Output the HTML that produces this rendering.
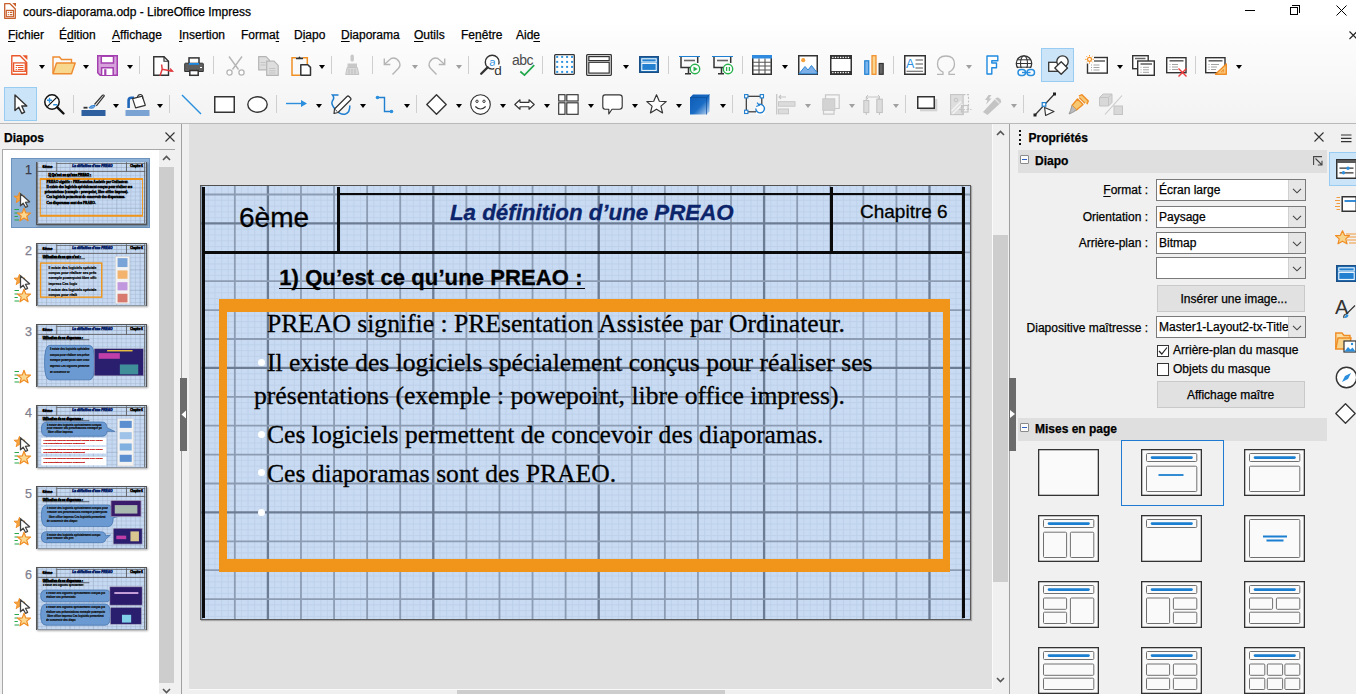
<!DOCTYPE html>
<html><head><meta charset="utf-8">
<style>
*{margin:0;padding:0;box-sizing:border-box}
html,body{width:1356px;height:694px;overflow:hidden;background:#f0f0f0;font-family:"Liberation Sans",sans-serif;font-size:12px;color:#000}
.a{position:absolute}
.t{position:absolute;white-space:pre;line-height:1}
.t{-webkit-text-stroke:0.25px currentColor}
.slide .t{-webkit-text-stroke:0.3px currentColor}
#top{left:0;top:0;width:1356px;height:124px;background:linear-gradient(#ffffff 0px,#ffffff 22px,#fcfcfc 40px,#f7f7f7 90px,#f2f2f2 123px)}
#topline{left:0;top:123px;width:1356px;height:1px;background:#b9b9b9}
.menu{top:29px;font-size:12px;color:#000}
.u{text-decoration:underline;text-underline-offset:2px}
.sep{position:absolute;width:1px;background:#cfcfcf}
.dd{position:absolute;width:0;height:0;border-left:3.5px solid transparent;border-right:3.5px solid transparent;border-top:4px solid #000}
.ddg{border-top-color:#a0a0a0}
svg{position:absolute;overflow:visible}
.mini .t{-webkit-text-stroke:4px currentColor}
</style></head><body>
<div id="top" class="a"></div>
<div id="topline" class="a"></div>

<!-- title bar -->
<svg style="left:4px;top:3px" width="12" height="16" viewBox="0 0 12 16"><path d="M0.7 0.7H6L11.3 6V15.3H0.7Z" fill="#fff" stroke="#c8602c" stroke-width="1.3" stroke-linejoin="round"/><path d="M8.3 0H12V3.7Z" fill="#c8602c"/><rect x="2.3" y="7.4" width="7.2" height="6.3" fill="none" stroke="#c8602c" stroke-width="1.2"/><path d="M3.8 9.4h1M5.8 9.4h2.5M3.8 11.6h1M5.8 11.6h2.5" stroke="#c8602c" stroke-width="1.1"/></svg>
<div class="t" style="left:23px;top:6px;font-size:12px">cours-diaporama.odp - LibreOffice Impress</div>
<div class="a" style="left:1245px;top:10px;width:10px;height:1px;background:#000"></div>
<div class="a" style="left:1290px;top:7px;width:8px;height:8px;border:1px solid #000;background:#fff"></div>
<div class="a" style="left:1292px;top:5px;width:8px;height:8px;border-top:1px solid #000;border-right:1px solid #000"></div>
<svg style="left:1336px;top:5px" width="11" height="11" viewBox="0 0 11 11"><path d="M0.5 0.5L10.5 10.5M10.5 0.5L0.5 10.5" stroke="#000" stroke-width="1"/></svg>

<!-- menu -->
<div class="t menu" style="left:8px"><span class="u">F</span>ichier</div>
<div class="t menu" style="left:59px">É<span class="u">d</span>ition</div>
<div class="t menu" style="left:112px"><span class="u">A</span>ffichage</div>
<div class="t menu" style="left:179px"><span class="u">I</span>nsertion</div>
<div class="t menu" style="left:241px">Forma<span class="u">t</span></div>
<div class="t menu" style="left:294px">D<span class="u">i</span>apo</div>
<div class="t menu" style="left:341px"><span class="u">D</span>iaporama</div>
<div class="t menu" style="left:414px"><span class="u">O</span>utils</div>
<div class="t menu" style="left:461px">Fe<span class="u">n</span>être</div>
<div class="t menu" style="left:516px">Aid<span class="u">e</span></div>
<svg style="left:1349px;top:30.5px" width="8" height="8" viewBox="0 0 8 8"><path d="M0.5 0.5L8 8M8 0.5L0.5 8" stroke="#222" stroke-width="1.1"/></svg>

<!-- TOOLBARS -->
<div class="a" style="left:4px;top:87px;width:33px;height:34px;background:#cce4f7;border:1px solid #99ccf3"></div>
<div class="a" style="left:1041px;top:48px;width:33px;height:34px;background:#cce4f7;border:1px solid #99ccf3"></div>
<svg style="left:1047.5px;top:54.5px" width="21" height="20" viewBox="0 0 21 20"><rect x="0.7" y="7.3" width="10" height="9" fill="#fff" stroke="#333" stroke-width="1.3"/><circle cx="14.5" cy="6.5" r="5.7" fill="#fff" stroke="#333" stroke-width="1.3"/><path d="M13.2 6.8L19.5 13L13.2 19.3L6.8 13Z" fill="#fff" stroke="#333" stroke-width="1.3" stroke-linejoin="round"/></svg>
<svg style="left:10.5px;top:55px" width="17" height="20" viewBox="0 0 17 20"><path d="M0.8 0.8H9L15.7 7.5V19.2H0.8Z" fill="#fff" stroke="#e9572b" stroke-width="1.4" stroke-linejoin="round"/><path d="M11.5 0.2H16.4V5.1Z" fill="#e9572b"/><rect x="2.6" y="7.9" width="11.7" height="8.4" fill="none" stroke="#e9572b" stroke-width="1.3"/><path d="M4.7 10.5H12.5M4.7 12.5h1.2M6.9 12.5H12.5M4.7 14.5h1.2M6.9 14.5H12.5" stroke="#e9572b" stroke-width="1"/></svg>
<svg style="left:51.5px;top:55.5px" width="24" height="19" viewBox="0 0 24 19"><path d="M1 17.5V1H7.5L9.5 3.5H19.5V7" fill="none" stroke="#ee8a2f" stroke-width="1.4"/><path d="M1 17.7L4.5 7H23.2L19.5 17.7Z" fill="#f8d88f" stroke="#ee8a2f" stroke-width="1.4" stroke-linejoin="round"/></svg>
<svg style="left:96.5px;top:54.5px" width="21" height="21" viewBox="0 0 21 21"><path d="M0.75 0.75H20.25V20.25H3.2L0.75 17.8Z" fill="#d7a2dc" stroke="#a43fb0" stroke-width="1.5"/><rect x="4.3" y="1.2" width="12.2" height="6.8" fill="#fff" stroke="#a43fb0" stroke-width="1.5"/><path d="M4.6 20V12.8H16.2V20" fill="#fff" stroke="#a43fb0" stroke-width="1.5"/><rect x="7.2" y="14.2" width="2.2" height="6" fill="#a43fb0"/></svg>
<svg style="left:152.5px;top:55.5px" width="21" height="21" viewBox="0 0 21 21"><path d="M0.75 0.75H11L15.5 5.25V19.25H0.75Z" fill="#fff" stroke="#333333" stroke-width="1.4"/><path d="M11 0.75V5.25H15.5" fill="none" stroke="#333333" stroke-width="1.2"/><path d="M8.6 8.5L9.2 13.2L7 19.8M9.2 13.2L19.5 15.2" fill="none" stroke="#e03a3e" stroke-width="1.5"/><path d="M15 14.5L19.5 15.2L17 12.5" fill="none" stroke="#e03a3e" stroke-width="1.2"/></svg>
<svg style="left:184px;top:56.5px" width="20" height="19" viewBox="0 0 20 19"><rect x="5" y="0.9" width="10" height="6" fill="#fff" stroke="#333333" stroke-width="1.5"/><path d="M1.5 6.2H18.5Q19.3 6.2 19.3 7V14.5H0.7V7Q0.7 6.2 1.5 6.2Z" fill="#5f5f5f" stroke="#333333" stroke-width="1"/><rect x="4.8" y="6" width="10.4" height="1.8" fill="#1e88e5"/><rect x="5.8" y="13.5" width="8.4" height="4.8" fill="#fff" stroke="#333333" stroke-width="1.5"/><rect x="16" y="10" width="2" height="1" fill="#fff"/></svg>
<svg style="left:225.5px;top:55.5px" width="19" height="20" viewBox="0 0 19 20"><path d="M3 0.5L12.5 13.5M16 0.5L6.5 13.5" stroke="#b5b5b5" stroke-width="1.4" fill="none"/><circle cx="3.5" cy="16.5" r="2.6" fill="#fff" stroke="#b5b5b5" stroke-width="1.3"/><circle cx="15.5" cy="16.5" r="2.6" fill="#fff" stroke="#b5b5b5" stroke-width="1.3"/></svg>
<svg style="left:257.5px;top:55.5px" width="21" height="20" viewBox="0 0 21 20"><path d="M0.7 0.7H8L11.5 4.2V13.8H0.7Z" fill="#dedede" stroke="#b5b5b5" stroke-width="1.2"/><path d="M8.7 5.2H16L20.2 9.4V19.3H8.7Z" fill="#dedede" stroke="#b5b5b5" stroke-width="1.2"/><path d="M11 12.5h6.5M11 14.8h6.5M11 17h6.5M2.5 6.5h5M2.5 9h5" stroke="#c4c4c4" stroke-width="1"/></svg>
<svg style="left:290.5px;top:54.5px" width="21" height="22" viewBox="0 0 21 22"><path d="M5 2.8H1V20.2H9M12 2.8H16.3V9" fill="none" stroke="#ef8f24" stroke-width="1.5"/><path d="M5 4.2V2.5H7.5Q8.5 0.5 9.5 2.5H12V4.2Z" fill="#333333"/><path d="M9.8 9.7H16.8L19.5 12.4V20.3H9.8Z" fill="#fff" stroke="#333333" stroke-width="1.5" stroke-linejoin="round"/></svg>
<svg style="left:345px;top:54px" width="15" height="22" viewBox="0 0 15 22"><rect x="5.5" y="0.6" width="3.4" height="7" rx="1.7" fill="#c8c8c8"/><path d="M2.5 9.5H12V13.5H2.5Z" fill="#c8c8c8"/><path d="M2.2 13.5L0.7 20.5H13.8L12.3 13.5Z" fill="#d8d8d8" stroke="#c4c4c4"/><path d="M4 15v5M7 15v5M10 15v5" stroke="#bdbdbd"/></svg>
<svg style="left:382.5px;top:55.5px" width="19" height="19" viewBox="0 0 19 19"><path d="M9.5 18.5L15.5 12.3Q18.2 9.3 16 5.5Q13 0.8 8 2.5L1.5 8.2" fill="none" stroke="#b5b5b5" stroke-width="1.4"/><path d="M1.3 2.5V8.5H7.3" fill="none" stroke="#b5b5b5" stroke-width="1.4"/></svg>
<svg style="left:426.5px;top:55.5px" width="19" height="19" viewBox="0 0 19 19"><path d="M9.5 18.5L3.5 12.3Q0.8 9.3 3 5.5Q6 0.8 11 2.5L17.5 8.2" fill="none" stroke="#b5b5b5" stroke-width="1.4"/><path d="M17.7 2.5V8.5H11.7" fill="none" stroke="#b5b5b5" stroke-width="1.4"/></svg>
<svg style="left:480px;top:55px" width="22" height="21" viewBox="0 0 22 21"><circle cx="12.2" cy="7.2" r="6.9" fill="#fff" stroke="#333333" stroke-width="1.4"/><path d="M7.6 12.4L1.2 18.8" stroke="#333333" stroke-width="2.3" stroke-linecap="round"/><text x="9.3" y="10.6" font-family="Liberation Sans" font-size="11.5" fill="#2b8fde">a</text><rect x="14.3" y="9.5" width="8" height="11" fill="#fcfcfc"/><text x="14.3" y="19.6" font-family="Liberation Sans" font-size="13.5" fill="#333333">d</text></svg>
<svg style="left:511.5px;top:54px" width="23" height="22" viewBox="0 0 23 22"><text x="0" y="10.6" font-family="Liberation Sans" font-size="14" fill="#4a4a4a" letter-spacing="-0.5">abc</text><path d="M8.3 17.5L12.5 21.2L22.2 11.2" fill="none" stroke="#20a84a" stroke-width="1.7"/></svg>
<svg style="left:554px;top:54px" width="21" height="21" viewBox="0 0 21 21"><rect x="0.7" y="0.7" width="19.6" height="19.6" rx="0.8" fill="#fff" stroke="#333333" stroke-width="1.3"/><rect x="2.20" y="1.90" width="2" height="2" fill="#2f93e0"/><rect x="2.20" y="6.90" width="2" height="2" fill="#2f93e0"/><rect x="2.20" y="11.90" width="2" height="2" fill="#2f93e0"/><rect x="2.20" y="16.90" width="2" height="2" fill="#2f93e0"/><rect x="7.15" y="1.90" width="2" height="2" fill="#2f93e0"/><rect x="7.15" y="6.90" width="2" height="2" fill="#2f93e0"/><rect x="7.15" y="11.90" width="2" height="2" fill="#2f93e0"/><rect x="7.15" y="16.90" width="2" height="2" fill="#2f93e0"/><rect x="12.10" y="1.90" width="2" height="2" fill="#2f93e0"/><rect x="12.10" y="6.90" width="2" height="2" fill="#2f93e0"/><rect x="12.10" y="11.90" width="2" height="2" fill="#2f93e0"/><rect x="12.10" y="16.90" width="2" height="2" fill="#2f93e0"/><rect x="17.05" y="1.90" width="2" height="2" fill="#2f93e0"/><rect x="17.05" y="6.90" width="2" height="2" fill="#2f93e0"/><rect x="17.05" y="11.90" width="2" height="2" fill="#2f93e0"/><rect x="17.05" y="16.90" width="2" height="2" fill="#2f93e0"/></svg>
<svg style="left:586px;top:54px" width="26" height="22" viewBox="0 0 26 22"><rect x="0.7" y="0.7" width="24.6" height="20.6" rx="0.8" fill="#fff" stroke="#333333" stroke-width="1.3"/><rect x="2.8" y="2.6" width="20.4" height="4" fill="none" stroke="#333333" stroke-width="1.2"/><rect x="2.8" y="8.3" width="20.4" height="10.8" fill="none" stroke="#333333" stroke-width="1.2"/></svg>
<svg style="left:639px;top:56px" width="20" height="17" viewBox="0 0 20 17"><rect x="0.75" y="0.75" width="18.5" height="15.5" fill="#2380d0" stroke="#1b4f85" stroke-width="1.5"/><rect x="2.8" y="2.8" width="14.4" height="3.2" fill="none" stroke="#fff" stroke-width="1"/><rect x="2.8" y="7.4" width="14.4" height="7" fill="none" stroke="#fff" stroke-width="1"/></svg>
<svg style="left:679px;top:55.5px" width="22" height="19" viewBox="0 0 22 19"><path d="M0 0.5H21" stroke="#1f7fd0" stroke-width="1"/><path d="M2 1V11.5H11" fill="none" stroke="#333333" stroke-width="1.5"/><path d="M18.7 1V7" stroke="#333333" stroke-width="1.5"/><path d="M5 4.5H16" stroke="#666" stroke-width="1.6"/><path d="M9.5 11.5V17.5M6 17.7H12" stroke="#333333" stroke-width="1.5"/><circle cx="16" cy="13" r="4.7" fill="#fff" stroke="#28b04d" stroke-width="1.4"/><path d="M14.5 10.5L18.7 13L14.5 15.5Z" fill="#28b04d"/></svg>
<svg style="left:712px;top:55.5px" width="22" height="19" viewBox="0 0 22 19"><path d="M0 0.5H21" stroke="#1f7fd0" stroke-width="1"/><path d="M2 1V11.5H11" fill="none" stroke="#333333" stroke-width="1.5"/><path d="M18.7 1V7" stroke="#333333" stroke-width="1.5"/><path d="M5 4.5H16" stroke="#666" stroke-width="1.6"/><path d="M9.5 11.5V17.5M6 17.7H12" stroke="#333333" stroke-width="1.5"/><circle cx="16" cy="13" r="4.7" fill="#fff" stroke="#28b04d" stroke-width="1.4"/><path d="M14.6 11v4M17.4 11v4" stroke="#28b04d" stroke-width="1.3"/></svg>
<svg style="left:752px;top:55px" width="20" height="20" viewBox="0 0 20 20"><rect x="0.75" y="0.75" width="18.5" height="18.5" fill="#fff" stroke="#333333" stroke-width="1.5"/><rect x="0" y="0" width="20" height="3.5" fill="#2f8be0"/><path d="M1 7.2H19M1 11H19M1 15H19M7 3.5V19M13 3.5V19" stroke="#555" stroke-width="1.1"/></svg>
<svg style="left:798px;top:55px" width="20" height="20" viewBox="0 0 20 20"><rect x="0.75" y="0.75" width="18.5" height="18.5" fill="#fff" stroke="#333333" stroke-width="1.5"/><circle cx="5.2" cy="5.2" r="2.1" fill="#f5a03a"/><path d="M1 18.8L7 11.5L10 15L13.5 10.5L19 17.5V18.8Z" fill="#7db0e8" stroke="#2e86d6" stroke-width="1"/></svg>
<svg style="left:830px;top:55px" width="22" height="20" viewBox="0 0 22 20"><rect x="0.75" y="0.75" width="20.5" height="18.5" fill="#fff" stroke="#333333" stroke-width="1.5"/><rect x="1" y="1" width="20" height="3" fill="#333333"/><rect x="1" y="16" width="20" height="3" fill="#333333"/><rect x="2.2" y="1.8" width="1.3" height="1.3" fill="#fff"/><rect x="2.2" y="16.9" width="1.3" height="1.3" fill="#fff"/><rect x="4.800000000000001" y="1.8" width="1.3" height="1.3" fill="#fff"/><rect x="4.800000000000001" y="16.9" width="1.3" height="1.3" fill="#fff"/><rect x="7.4" y="1.8" width="1.3" height="1.3" fill="#fff"/><rect x="7.4" y="16.9" width="1.3" height="1.3" fill="#fff"/><rect x="10.0" y="1.8" width="1.3" height="1.3" fill="#fff"/><rect x="10.0" y="16.9" width="1.3" height="1.3" fill="#fff"/><rect x="12.600000000000001" y="1.8" width="1.3" height="1.3" fill="#fff"/><rect x="12.600000000000001" y="16.9" width="1.3" height="1.3" fill="#fff"/><rect x="15.2" y="1.8" width="1.3" height="1.3" fill="#fff"/><rect x="15.2" y="16.9" width="1.3" height="1.3" fill="#fff"/><rect x="17.8" y="1.8" width="1.3" height="1.3" fill="#fff"/><rect x="17.8" y="16.9" width="1.3" height="1.3" fill="#fff"/></svg>
<svg style="left:864px;top:55px" width="20" height="20" viewBox="0 0 20 20"><rect x="0.75" y="5.8" width="4" height="13.5" fill="#7ab5ee" stroke="#1f7fd0" stroke-width="1.2"/><rect x="8" y="0.7" width="4" height="18.6" fill="#f8d490" stroke="#f08a24" stroke-width="1.2"/><rect x="15.2" y="8.5" width="4" height="10.8" fill="#666" stroke="#333" stroke-width="1.2"/></svg>
<svg style="left:904px;top:55px" width="22" height="20" viewBox="0 0 22 20"><rect x="0.75" y="0.75" width="20.5" height="18.5" fill="#fff" stroke="#333333" stroke-width="1.5"/><text x="2" y="13.3" font-family="Liberation Sans" font-size="12.5" fill="#2b8fde">A</text><path d="M11.5 5H19M11.5 9H19M11.5 13H19M2.5 16.3H19" stroke="#555" stroke-width="1.1"/></svg>
<svg style="left:936px;top:55px" width="20" height="20" viewBox="0 0 20 20"><path d="M1 19.3H7V17.2Q1.5 14.5 1.5 9Q1.5 1 10 1Q18.5 1 18.5 9Q18.5 14.5 13 17.2V19.3H19" fill="none" stroke="#b5b5b5" stroke-width="1.3"/></svg>
<svg style="left:985.5px;top:55px" width="13" height="20" viewBox="0 0 13 20"><path d="M1 1H11.8V5.8H5.8V8H10.5V12.8H5.8V19H1Z" fill="#fff" stroke="#1f8ae0" stroke-width="1.4" stroke-linejoin="round"/></svg>
<svg style="left:1015px;top:55px" width="21" height="22" viewBox="0 0 21 22"><circle cx="9" cy="8.5" r="7.7" fill="#fff" stroke="#333333" stroke-width="1.3"/><ellipse cx="9" cy="8.5" rx="3.5" ry="7.7" fill="none" stroke="#333333" stroke-width="1.1"/><path d="M1.3 8.5H16.7M2.5 4.8H15.5M2.5 12.2H15.5" stroke="#333333" stroke-width="1"/><rect x="2.2" y="13" width="18" height="8" fill="#fcfcfc"/><rect x="3" y="14.5" width="7.5" height="6" rx="3" fill="none" stroke="#2b8fde" stroke-width="1.5"/><rect x="12" y="14.5" width="7.5" height="6" rx="3" fill="none" stroke="#2b8fde" stroke-width="1.5"/><path d="M7 17.5H15.5" stroke="#2b8fde" stroke-width="1.4"/></svg>
<svg style="left:1085px;top:54.5px" width="23" height="19" viewBox="0 0 23 19"><rect x="2.5" y="2.5" width="19.8" height="15.6" fill="#fff" stroke="#333333" stroke-width="1.4"/><path d="M9 6H20" stroke="#666" stroke-width="1.6"/><path d="M6 10h1M8.5 10h6M6 12.5h1M8.5 12.5h6M6 15h1M8.5 15h6" stroke="#999" stroke-width="0.9"/><rect x="0" y="0" width="9" height="8.5" fill="#fcfcfc"/><circle cx="4.5" cy="4.3" r="2" fill="none" stroke="#f39224" stroke-width="1.2"/><path d="M4.5 0V1.3M4.5 7.3V8.6M0.2 4.3H1.5M7.5 4.3H8.8M1.5 1.3L2.4 2.2M6.6 6.4L7.5 7.3M7.5 1.3L6.6 2.2M1.5 7.3L2.4 6.4" stroke="#f39224" stroke-width="1"/></svg>
<svg style="left:1132px;top:55px" width="23" height="21" viewBox="0 0 23 21"><rect x="0.7" y="0.7" width="15.5" height="13" fill="#fff" stroke="#333333" stroke-width="1.4"/><path d="M3 3.5H13.5" stroke="#666" stroke-width="1.5"/><rect x="5.7" y="6" width="16.6" height="14.3" fill="#fff" stroke="#333333" stroke-width="1.4"/><path d="M8.5 9H20" stroke="#666" stroke-width="1.6"/><path d="M8.5 12.3h1M11 12.3h6M8.5 14.8h1M11 14.8h6M8.5 17.3h1M11 17.3h6" stroke="#999" stroke-width="0.9"/></svg>
<svg style="left:1166px;top:56.5px" width="22" height="20" viewBox="0 0 22 20"><rect x="0.7" y="0.7" width="19.3" height="15" fill="#fff" stroke="#333333" stroke-width="1.4"/><path d="M3.5 3.8H17.5" stroke="#666" stroke-width="1.6"/><path d="M3.5 7.5h1M6 7.5h6M3.5 10h1M6 10h6M3.5 12.5h1M6 12.5h6" stroke="#999" stroke-width="0.9"/><path d="M12.5 11.5L20.5 19.5M20.5 11.5L12.5 19.5" stroke="#ee3b3b" stroke-width="1.4"/></svg>
<svg style="left:1204.5px;top:57px" width="22" height="18" viewBox="0 0 22 18"><rect x="0.7" y="0.7" width="19.3" height="15" fill="#fff" stroke="#333333" stroke-width="1.4"/><path d="M3.5 3.8H17.5" stroke="#666" stroke-width="1.6"/><path d="M3.5 7.5h1M6 7.5h8M3.5 10h1M6 10h6M3.5 12.5h1M6 12.5h5" stroke="#999" stroke-width="0.9"/><path d="M21.3 7V17.3H10.5Z" fill="#f8c87a" stroke="#ef8c24" stroke-width="1.4" stroke-linejoin="round"/><path d="M18.5 12.5V14.8H16.2Z" fill="#fff" stroke="#ef8c24" stroke-width="0.9"/></svg>
<svg style="left:13.5px;top:93.5px" width="15" height="21" viewBox="0 0 15 21"><path d="M1 1V16.5L4.8 13.3L7.8 19.5L10.6 18.2L7.8 12H12.8Z" fill="#fff" stroke="#333333" stroke-width="1.4" stroke-linejoin="round"/></svg>
<svg style="left:43.5px;top:93.5px" width="21" height="21" viewBox="0 0 21 21"><circle cx="8" cy="8" r="7.2" fill="#fff" stroke="#111" stroke-width="1.5"/><path d="M3.3 12.7L12.7 3.3" stroke="#111" stroke-width="1.2"/><path d="M3 6.2H8M5.5 3.7V8.7M9.2 10.8H13.2" stroke="#2b8fde" stroke-width="1.4"/><path d="M13.3 13.3L19.5 19.5" stroke="#111" stroke-width="2.4" stroke-linecap="round"/></svg>
<svg style="left:80.5px;top:94px" width="25" height="23" viewBox="0 0 25 23"><path d="M11.5 11.5Q9 12 8 13.8Q10.5 14.7 12.5 13.8Q14 13 14.2 11.5Z" fill="#6ea7e2" stroke="#2f7fcf" stroke-width="1"/><path d="M13.5 10.5L21.5 1.3Q23 0.5 23.3 1.8L15.3 11.8" fill="#fff" stroke="#333333" stroke-width="1.2"/><rect x="2.5" y="12.8" width="4" height="1.8" fill="#333333"/><rect x="0.5" y="16" width="24" height="6" fill="#2e5f9e"/></svg>
<svg style="left:124.5px;top:94px" width="25" height="23" viewBox="0 0 25 23"><path d="M3.6 14V6.5Q3.6 3.8 6.5 3.8H9" fill="none" stroke="#1f66b8" stroke-width="2.6"/><path d="M7.6 4.6L17.3 2.2L20.3 11.3L10.6 13.9Z" fill="#fff" stroke="#333333" stroke-width="1.2" stroke-linejoin="round"/><path d="M12.3 3.5Q13 0.3 15.5 0.5Q18.3 0.9 17.6 4.6" fill="none" stroke="#333333" stroke-width="1.1"/><rect x="0.5" y="16" width="24" height="6" fill="#7aa3d4"/></svg>
<svg style="left:181px;top:93.5px" width="21" height="21" viewBox="0 0 21 21"><path d="M1 1L20 20" stroke="#2b8fde" stroke-width="1.4"/></svg>
<svg style="left:213.5px;top:95.5px" width="21" height="17" viewBox="0 0 21 17"><rect x="0.75" y="0.75" width="19.5" height="15.5" fill="#fff" stroke="#333333" stroke-width="1.5"/></svg>
<svg style="left:246.5px;top:95.5px" width="21" height="17" viewBox="0 0 21 17"><ellipse cx="10.5" cy="8.5" rx="9.7" ry="7.7" fill="#fff" stroke="#333333" stroke-width="1.4"/></svg>
<svg style="left:286px;top:99.5px" width="21" height="7" viewBox="0 0 21 7"><path d="M0 3.5H17" stroke="#2b8fde" stroke-width="1.4"/><path d="M15 0L21 3.5L15 7Z" fill="#2b8fde"/></svg>
<svg style="left:331px;top:93.5px" width="20" height="22" viewBox="0 0 20 22"><path d="M7.5 1H1.5Q4 4 1.3 7Q-0.5 10.5 5 16Q9 21 14.5 20Q19 18.5 18.8 11.5" fill="none" stroke="#1f7fd0" stroke-width="1.5"/><path d="M3.5 15L16 2.5Q17 1.5 18 2.5L19.5 4Q20.5 5 19.5 6L7 18.5L3 19.5Z" fill="#fff" stroke="#333333" stroke-width="1.2" stroke-linejoin="round"/><path d="M4.2 15.5L6.5 17.8" stroke="#333333" stroke-width="1"/></svg>
<svg style="left:374.5px;top:94.5px" width="19" height="19" viewBox="0 0 19 19"><path d="M2.5 2.5H9.5V16.5H16.5" fill="none" stroke="#1f7fd0" stroke-width="1.4"/><circle cx="2.5" cy="2.5" r="1.8" fill="#2b8fde"/><circle cx="16.5" cy="16.5" r="1.8" fill="#2b8fde"/></svg>
<svg style="left:426px;top:93.5px" width="21" height="21" viewBox="0 0 21 21"><path d="M10.5 0.8L20.2 10.5L10.5 20.2L0.8 10.5Z" fill="#fff" stroke="#333333" stroke-width="1.4" stroke-linejoin="round"/></svg>
<svg style="left:469.5px;top:93.5px" width="21" height="21" viewBox="0 0 21 21"><circle cx="10.5" cy="10.5" r="9.8" fill="#fff" stroke="#333333" stroke-width="1.15"/><circle cx="7" cy="7.3" r="1.2" fill="none" stroke="#333333" stroke-width="1"/><circle cx="14" cy="7.3" r="1.2" fill="none" stroke="#333333" stroke-width="1"/><path d="M5.3 12.5Q10.5 17.5 15.7 12.5" fill="none" stroke="#333333" stroke-width="1.15"/></svg>
<svg style="left:514px;top:98.5px" width="21" height="11" viewBox="0 0 21 11"><path d="M0.8 5.5L6 0.8V3.3H15V0.8L20.2 5.5L15 10.2V7.7H6V10.2Z" fill="#fff" stroke="#333333" stroke-width="1.15" stroke-linejoin="round"/></svg>
<svg style="left:558px;top:93.5px" width="21" height="21" viewBox="0 0 21 21"><rect x="0.7" y="0.7" width="6.3" height="6.3" fill="#fff" stroke="#333333" stroke-width="1.15"/><rect x="8.8" y="0.7" width="11.3" height="6.3" fill="#fff" stroke="#333333" stroke-width="1.15"/><rect x="0.7" y="8.8" width="6.3" height="11.5" fill="#fff" stroke="#333333" stroke-width="1.15"/><rect x="8.8" y="8.8" width="11.3" height="11.5" fill="#fff" stroke="#333333" stroke-width="1.15"/></svg>
<svg style="left:601.5px;top:93.5px" width="21" height="21" viewBox="0 0 21 21"><path d="M3 0.8H17.5Q20.2 0.8 20.2 3.5V12.5Q20.2 15.2 17.5 15.2H10L6.8 20V15.2H3Q0.8 15.2 0.8 12.5V3.5Q0.8 0.8 3 0.8Z" fill="#fff" stroke="#333333" stroke-width="1.15" stroke-linejoin="round"/></svg>
<svg style="left:645.5px;top:94px" width="21" height="20" viewBox="0 0 21 20"><path d="M10.5 0.8L13.3 7.2L20.2 7.6L14.9 12.1L16.6 19L10.5 15.2L4.4 19L6.1 12.1L0.8 7.6L7.7 7.2Z" fill="#fff" stroke="#333333" stroke-width="1.15" stroke-linejoin="round"/></svg>
<svg style="left:690px;top:93.5px" width="20" height="21" viewBox="0 0 20 21"><defs><linearGradient id="cg" x1="0" y1="0" x2="1" y2="1"><stop offset="0" stop-color="#0d5bb5"/><stop offset="0.55" stop-color="#1a6cc4"/><stop offset="1" stop-color="#c8dcf3"/></linearGradient></defs><path d="M3 0.5H19.5V17.5L16.5 20.5H0V3.5Z" fill="url(#cg)"/><path d="M0 3.5H16.5V20.5M16.5 3.5L19.5 0.5" fill="none" stroke="#0b4c9a" stroke-width="0.7"/></svg>
<svg style="left:743.5px;top:93.5px" width="22" height="21" viewBox="0 0 22 21"><rect x="2.3" y="2.3" width="15.5" height="15.5" fill="none" stroke="#333333" stroke-width="1.2"/><rect x="0.6" y="0.6" width="3.3" height="3.3" fill="#fff" stroke="#1f7fd0" stroke-width="1.1"/><rect x="16.2" y="0.6" width="3.3" height="3.3" fill="#fff" stroke="#1f7fd0" stroke-width="1.1"/><rect x="0.6" y="16.2" width="3.3" height="3.3" fill="#fff" stroke="#1f7fd0" stroke-width="1.1"/><rect x="12" y="11" width="9" height="10" fill="#fcfcfc"/><path d="M14 10.8A4.3 4.3 0 1 1 11.8 14.5" fill="none" stroke="#1f7fd0" stroke-width="1.4"/><path d="M13 8.7L15.3 11.2L12.2 12.5" fill="none" stroke="#1f7fd0" stroke-width="1.2"/></svg>
<svg style="left:776px;top:93.5px" width="20" height="21" viewBox="0 0 20 21"><path d="M0.7 0V20.5" stroke="#c4c4c4" stroke-width="1.2"/><path d="M3 3H10M5 1L3 3L5 5" fill="none" stroke="#c4c4c4" stroke-width="1.1"/><rect x="2.5" y="7.7" width="16.5" height="4.5" fill="#dcdcdc" stroke="#c8c8c8"/><rect x="2.5" y="15" width="10" height="4.8" fill="#dcdcdc" stroke="#c8c8c8"/></svg>
<svg style="left:818.5px;top:93.5px" width="21" height="21" viewBox="0 0 21 21"><path d="M6.5 5V0.8H20.2V14.5H16" fill="none" stroke="#c8c8c8" stroke-width="1.2"/><path d="M4.5 16V20.2H15V16" fill="none" stroke="#c8c8c8" stroke-width="1.2"/><rect x="3.8" y="4.8" width="12" height="11.5" fill="#d3d3d3" stroke="#c8c8c8"/></svg>
<svg style="left:862.5px;top:93.5px" width="21" height="21" viewBox="0 0 21 21"><path d="M3 3H17M5 1L3 3L5 5M15 1L17 3L15 5" fill="none" stroke="#c4c4c4" stroke-width="1"/><rect x="0.8" y="6.5" width="5" height="12" fill="#dcdcdc" stroke="#c4c4c4" stroke-width="1.1"/><rect x="13.8" y="5.2" width="5.5" height="13.3" fill="#dcdcdc" stroke="#c4c4c4" stroke-width="1.1"/><path d="M3.3 3V6.5M3.3 18.5V21M16.5 3V5.2M16.5 18.5V21" stroke="#c4c4c4"/></svg>
<svg style="left:917px;top:95.5px" width="21" height="16" viewBox="0 0 21 16"><rect x="3" y="3" width="17.3" height="12.3" fill="#d2d2d2"/><rect x="0.75" y="0.75" width="16.5" height="11.5" fill="#fff" stroke="#333333" stroke-width="1.5"/></svg>
<svg style="left:950px;top:93.5px" width="22" height="22" viewBox="0 0 22 22"><rect x="0.6" y="0.6" width="12.5" height="20" fill="#dedede" stroke="#c4c4c4" stroke-width="1.1"/><circle cx="6" cy="6" r="1.8" fill="none" stroke="#c4c4c4"/><path d="M1.5 17L11 7.5M2.5 20L12.5 10" stroke="#f5f5f5" stroke-width="1.3"/><path d="M13.2 0.6H18.5V15.5M9 15.5H21.5M13 11.5V21.5" fill="none" stroke="#c4c4c4" stroke-width="1.1" stroke-dasharray="2.2 1.5"/><rect x="11.5" y="11.5" width="6.5" height="6.5" fill="none" stroke="#c4c4c4" stroke-width="1.2"/></svg>
<svg style="left:980.5px;top:93.5px" width="21" height="21" viewBox="0 0 21 21"><path d="M2 18L14.5 4.5Q16.5 2.5 18.5 4.5L19.5 5.5Q21 7.5 19 9.5L6.5 21Z" fill="#c4c4c4"/><path d="M4 6L7.5 1H10.5L8 4.5H10.5L5 10.5L6.5 6Z" fill="#c4c4c4"/><path d="M14 5L18.5 9.5" stroke="#e6e6e6" stroke-width="1.2"/></svg>
<svg style="left:1032.5px;top:91.5px" width="23" height="25" viewBox="0 0 23 25"><path d="M2 23L21.5 2" stroke="#333333" stroke-width="1.15"/><rect x="0.5" y="21.5" width="3" height="3" fill="#222"/><rect x="20" y="0.5" width="3" height="3" fill="#222"/><rect x="9.2" y="10.6" width="3.6" height="3.6" fill="#fff" stroke="#1f7fd0" stroke-width="1.2"/><path d="M11.6 15.5L21 19.5L12.6 23.5Z" fill="#fff" stroke="#333333" stroke-width="1.15" stroke-linejoin="round"/></svg>
<svg style="left:1067.5px;top:93.5px" width="21" height="21" viewBox="0 0 21 21"><path d="M9.5 5L15 10.5L8.5 16L4 11.5Z" fill="#f7c873" stroke="#ef8c24" stroke-width="1.3" stroke-linejoin="round"/><path d="M11.3 3.5L17 9.2M10.8 2L14 0.7L20.3 7L19 10.2" fill="#f7c873" stroke="#ef8c24" stroke-width="1.3" stroke-linejoin="round"/><path d="M4 11.5L2.5 16.5L1 20L4.5 18.5L8.5 16" fill="#bbb" stroke="#999" stroke-width="1"/></svg>
<svg style="left:1099px;top:93px" width="25" height="22" viewBox="0 0 25 22"><path d="M0.5 4.5L4 1H13V9.5L9.5 13H0.5Z" fill="#d8d8d8" stroke="#c4c4c4"/><path d="M0.5 4.5H9.5V13M9.5 4.5L13 1" fill="none" stroke="#c4c4c4"/><path d="M6 21.5L23 2.5" stroke="#c8c8c8" stroke-width="1.1"/><rect x="15" y="13" width="8.5" height="8.5" fill="#d8d8d8" stroke="#c4c4c4"/></svg>
<div class="dd" style="left:38.5px;top:65px"></div>
<div class="dd" style="left:83px;top:65px"></div>
<div class="dd" style="left:126.8px;top:65px"></div>
<div class="dd" style="left:319px;top:65px"></div>
<div class="dd ddg" style="left:412px;top:65px"></div>
<div class="dd ddg" style="left:456px;top:65px"></div>
<div class="dd" style="left:623.2px;top:65px"></div>
<div class="dd" style="left:782.2px;top:65px"></div>
<div class="dd ddg" style="left:966px;top:65px"></div>
<div class="dd" style="left:1117.3px;top:65px"></div>
<div class="dd" style="left:1235.5px;top:65px"></div>
<div class="dd" style="left:112.8px;top:104px"></div>
<div class="dd" style="left:157.3px;top:104px"></div>
<div class="dd" style="left:316px;top:104px"></div>
<div class="dd" style="left:360.3px;top:104px"></div>
<div class="dd" style="left:404.4px;top:104px"></div>
<div class="dd" style="left:456px;top:104px"></div>
<div class="dd" style="left:500.2px;top:104px"></div>
<div class="dd" style="left:543.8px;top:104px"></div>
<div class="dd" style="left:588.3px;top:104px"></div>
<div class="dd" style="left:632px;top:104px"></div>
<div class="dd" style="left:676.4px;top:104px"></div>
<div class="dd" style="left:719.8px;top:104px"></div>
<div class="dd ddg" style="left:804.8px;top:104px"></div>
<div class="dd ddg" style="left:849px;top:104px"></div>
<div class="dd ddg" style="left:893px;top:104px"></div>
<div class="dd ddg" style="left:1011.3px;top:104px"></div>
<div class="sep" style="left:138.9px;top:56px;height:18px"></div>
<div class="sep" style="left:213px;top:56px;height:18px"></div>
<div class="sep" style="left:331.2px;top:56px;height:18px"></div>
<div class="sep" style="left:372px;top:56px;height:18px"></div>
<div class="sep" style="left:468.3px;top:56px;height:18px"></div>
<div class="sep" style="left:542px;top:56px;height:18px"></div>
<div class="sep" style="left:667.9px;top:56px;height:18px"></div>
<div class="sep" style="left:741.9px;top:56px;height:18px"></div>
<div class="sep" style="left:893px;top:56px;height:18px"></div>
<div class="sep" style="left:1195px;top:56px;height:18px"></div>
<div class="sep" style="left:72.9px;top:95px;height:18px"></div>
<div class="sep" style="left:169.2px;top:95px;height:18px"></div>
<div class="sep" style="left:276.1px;top:95px;height:18px"></div>
<div class="sep" style="left:416.1px;top:95px;height:18px"></div>
<div class="sep" style="left:731.9px;top:95px;height:18px"></div>
<div class="sep" style="left:905px;top:95px;height:18px"></div>
<div class="sep" style="left:1023px;top:95px;height:18px"></div>

<!-- LEFT PANE -->
<div class="t" style="left:4px;top:132px;font-weight:bold;font-size:12px">Diapos</div>
<svg style="left:165px;top:132px" width="10" height="10" viewBox="0 0 10 10"><path d="M0.5 0.5L9.5 9.5M9.5 0.5L0.5 9.5" stroke="#333" stroke-width="1.1"/></svg>
<div class="a" style="left:2px;top:149px;width:173px;height:545px;background:#fff;border-left:1px solid #a8a8a8;border-top:1px solid #a8a8a8"></div>
<div class="a" style="left:159px;top:150px;width:16px;height:544px;background:#f0f0f0"></div>
<div class="a" style="left:159px;top:167px;width:15px;height:516px;background:#cdcdcd"></div>
<svg style="left:162px;top:155px" width="9" height="6" viewBox="0 0 9 6"><path d="M1 5L4.5 1.5L8 5" fill="none" stroke="#555" stroke-width="1.6"/></svg>
<svg style="left:162px;top:688px" width="9" height="6" viewBox="0 0 9 6"><path d="M1 1L4.5 4.5L8 1" fill="none" stroke="#555" stroke-width="1.6"/></svg>
<div class="a" style="left:181px;top:124px;width:1px;height:570px;background:#a0a0a0"></div>
<div class="a" style="left:11px;top:158px;width:139px;height:70px;background:#8fb1d5;border:1px solid #6b93bd"></div>
<div class="a" style="left:35.5px;top:161.5px;width:111px;height:63px;background:#555;box-shadow:1px 1px 2px rgba(0,0,0,.35)"></div>
<div class="a mini" style="left:36.5px;top:162px;width:771px;height:435px;transform-origin:0 0;transform:scale(0.14137483787289234);background:#c6d9f2;overflow:hidden"><svg style="left:0;top:0" width="771" height="435" viewBox="0 0 771 435"><line x1="1.74" y1="0" x2="1.74" y2="435" stroke="#9fb0c7" stroke-width="2.6"/><line x1="34.82" y1="0" x2="34.82" y2="435" stroke="#9fb0c7" stroke-width="2.6"/><line x1="67.9" y1="0" x2="67.9" y2="435" stroke="#8595ad" stroke-width="3.1"/><line x1="100.98" y1="0" x2="100.98" y2="435" stroke="#9fb0c7" stroke-width="2.6"/><line x1="134.06" y1="0" x2="134.06" y2="435" stroke="#9fb0c7" stroke-width="2.6"/><line x1="167.14" y1="0" x2="167.14" y2="435" stroke="#9fb0c7" stroke-width="2.6"/><line x1="200.22" y1="0" x2="200.22" y2="435" stroke="#9fb0c7" stroke-width="2.6"/><line x1="233.3" y1="0" x2="233.3" y2="435" stroke="#8595ad" stroke-width="3.1"/><line x1="266.38" y1="0" x2="266.38" y2="435" stroke="#9fb0c7" stroke-width="2.6"/><line x1="299.46" y1="0" x2="299.46" y2="435" stroke="#9fb0c7" stroke-width="2.6"/><line x1="332.54" y1="0" x2="332.54" y2="435" stroke="#9fb0c7" stroke-width="2.6"/><line x1="365.62" y1="0" x2="365.62" y2="435" stroke="#9fb0c7" stroke-width="2.6"/><line x1="398.7" y1="0" x2="398.7" y2="435" stroke="#8595ad" stroke-width="3.1"/><line x1="431.78" y1="0" x2="431.78" y2="435" stroke="#9fb0c7" stroke-width="2.6"/><line x1="464.86" y1="0" x2="464.86" y2="435" stroke="#9fb0c7" stroke-width="2.6"/><line x1="497.94" y1="0" x2="497.94" y2="435" stroke="#9fb0c7" stroke-width="2.6"/><line x1="531.02" y1="0" x2="531.02" y2="435" stroke="#9fb0c7" stroke-width="2.6"/><line x1="564.1" y1="0" x2="564.1" y2="435" stroke="#8595ad" stroke-width="3.1"/><line x1="597.18" y1="0" x2="597.18" y2="435" stroke="#9fb0c7" stroke-width="2.6"/><line x1="630.26" y1="0" x2="630.26" y2="435" stroke="#9fb0c7" stroke-width="2.6"/><line x1="663.34" y1="0" x2="663.34" y2="435" stroke="#9fb0c7" stroke-width="2.6"/><line x1="696.42" y1="0" x2="696.42" y2="435" stroke="#9fb0c7" stroke-width="2.6"/><line x1="729.5" y1="0" x2="729.5" y2="435" stroke="#8595ad" stroke-width="3.1"/><line x1="762.58" y1="0" x2="762.58" y2="435" stroke="#9fb0c7" stroke-width="2.6"/><line x1="0" y1="9.5" x2="771" y2="9.5" stroke="#9fb0c7" stroke-width="2.6"/><line x1="0" y1="38.4" x2="771" y2="38.4" stroke="#8595ad" stroke-width="3.1"/><line x1="0" y1="67.3" x2="771" y2="67.3" stroke="#9fb0c7" stroke-width="2.6"/><line x1="0" y1="96.2" x2="771" y2="96.2" stroke="#9fb0c7" stroke-width="2.6"/><line x1="0" y1="125.1" x2="771" y2="125.1" stroke="#9fb0c7" stroke-width="2.6"/><line x1="0" y1="154" x2="771" y2="154" stroke="#9fb0c7" stroke-width="2.6"/><line x1="0" y1="182.9" x2="771" y2="182.9" stroke="#8595ad" stroke-width="3.1"/><line x1="0" y1="211.8" x2="771" y2="211.8" stroke="#9fb0c7" stroke-width="2.6"/><line x1="0" y1="240.7" x2="771" y2="240.7" stroke="#9fb0c7" stroke-width="2.6"/><line x1="0" y1="269.6" x2="771" y2="269.6" stroke="#9fb0c7" stroke-width="2.6"/><line x1="0" y1="298.5" x2="771" y2="298.5" stroke="#9fb0c7" stroke-width="2.6"/><line x1="0" y1="327.4" x2="771" y2="327.4" stroke="#8595ad" stroke-width="3.1"/><line x1="0" y1="356.3" x2="771" y2="356.3" stroke="#9fb0c7" stroke-width="2.6"/><line x1="0" y1="385.2" x2="771" y2="385.2" stroke="#9fb0c7" stroke-width="2.6"/><line x1="0" y1="414.1" x2="771" y2="414.1" stroke="#9fb0c7" stroke-width="2.6"/></svg><div class="a" style="left:2px;top:2px;width:6px;height:431px;background:#5a5a5a"></div>
<div class="a" style="left:759px;top:2px;width:6px;height:431px;background:#5a5a5a"></div>
<div class="a" style="left:138px;top:8px;width:627px;height:5px;background:#5a5a5a"></div>
<div class="a" style="left:137px;top:2px;width:6px;height:66px;background:#5a5a5a"></div>
<div class="a" style="left:630px;top:2px;width:6px;height:66px;background:#5a5a5a"></div>
<div class="a" style="left:2px;top:63px;width:763px;height:6px;background:#5a5a5a"></div>
<div class="t" style="left:39px;top:19px;font-size:28px">6ème</div>
<div class="t" style="left:660px;top:16.7px;font-size:19px">Chapitre 6</div>
<div class="t" style="left:250px;top:17px;font-size:22.3px;font-weight:bold;font-style:italic;color:#0c246a">La définition d’une PREAO</div>
<div class="t" style="left:79.2px;top:82px;font-size:22px;font-weight:bold;letter-spacing:0.1px">1) Qu’est ce qu’une PREAO :</div>
<div class="a" style="left:79px;top:103.1px;width:306px;height:4px;background:#000"></div>
<div class="a" style="left:19px;top:114px;width:731px;height:273px;border-style:solid;border-color:#f0951a;border-width:13.5px 7.5px 13.5px 8px"></div>
<div class="t" style="left:67px;top:126.1px;font-family:'Liberation Serif',serif;font-size:25.6px">PREAO signifie : PREsentation Assistée par Ordinateur.</div>
<div class="t" style="left:67px;top:165.1px;font-family:'Liberation Serif',serif;font-size:25.6px">Il existe des logiciels spécialement conçus pour réaliser ses</div>
<div class="t" style="left:54px;top:197.8px;font-family:'Liberation Serif',serif;font-size:25.6px">présentations (exemple : powepoint, libre office impress).</div>
<div class="t" style="left:67px;top:237.4px;font-family:'Liberation Serif',serif;font-size:25.6px">Ces logiciels permettent de concevoir des diaporamas.</div>
<div class="t" style="left:67px;top:275.7px;font-family:'Liberation Serif',serif;font-size:25.6px">Ces diaporamas sont des PRAEO.</div>
</div>
<div class="t" style="left:25px;top:163.5px;font-size:12.5px;color:#3a3a4a">1</div>
<svg style="left:13.5px;top:190px" width="17" height="18" viewBox="0 0 17 18"><path d="M5.50 2.20L6.91 6.06L11.02 6.21L7.78 8.74L8.91 12.69L5.50 10.40L2.09 12.69L3.22 8.74L-0.02 6.21L4.09 6.06Z" fill="#f7a642" stroke="#ef8c24" stroke-width="0.9" stroke-linejoin="round"/><path d="M6.5 3.8V15.8L9.2 13.3L11.5 17.3L13.6 16.3L11.4 12.3L15.6 11.8Z" fill="#fff" stroke="#444" stroke-width="1.3" stroke-linejoin="round"/></svg>
<svg style="left:13.5px;top:207.5px" width="18" height="15" viewBox="0 0 18 15"><path d="M0.5 1.5H5M0.5 5H3.8M0.5 8.5H3.8M0.5 12H5" stroke="#27a84a" stroke-width="1.2"/><path d="M10.00 0.30L11.70 4.85L16.56 5.07L12.76 8.10L14.06 12.78L10.00 10.10L5.94 12.78L7.24 8.10L3.44 5.07L8.30 4.85Z" fill="#fbd890" stroke="#ef8c24" stroke-width="1.2" stroke-linejoin="round"/></svg>
<div class="a" style="left:35.5px;top:243px;width:111px;height:63px;background:#555;box-shadow:1px 1px 2px rgba(0,0,0,.35)"></div>
<div class="a mini" style="left:36.5px;top:243.5px;width:771px;height:435px;transform-origin:0 0;transform:scale(0.14137483787289234);background:#c6d9f2;overflow:hidden"><svg style="left:0;top:0" width="771" height="435" viewBox="0 0 771 435"><line x1="1.74" y1="0" x2="1.74" y2="435" stroke="#9fb0c7" stroke-width="2.6"/><line x1="34.82" y1="0" x2="34.82" y2="435" stroke="#9fb0c7" stroke-width="2.6"/><line x1="67.9" y1="0" x2="67.9" y2="435" stroke="#8595ad" stroke-width="3.1"/><line x1="100.98" y1="0" x2="100.98" y2="435" stroke="#9fb0c7" stroke-width="2.6"/><line x1="134.06" y1="0" x2="134.06" y2="435" stroke="#9fb0c7" stroke-width="2.6"/><line x1="167.14" y1="0" x2="167.14" y2="435" stroke="#9fb0c7" stroke-width="2.6"/><line x1="200.22" y1="0" x2="200.22" y2="435" stroke="#9fb0c7" stroke-width="2.6"/><line x1="233.3" y1="0" x2="233.3" y2="435" stroke="#8595ad" stroke-width="3.1"/><line x1="266.38" y1="0" x2="266.38" y2="435" stroke="#9fb0c7" stroke-width="2.6"/><line x1="299.46" y1="0" x2="299.46" y2="435" stroke="#9fb0c7" stroke-width="2.6"/><line x1="332.54" y1="0" x2="332.54" y2="435" stroke="#9fb0c7" stroke-width="2.6"/><line x1="365.62" y1="0" x2="365.62" y2="435" stroke="#9fb0c7" stroke-width="2.6"/><line x1="398.7" y1="0" x2="398.7" y2="435" stroke="#8595ad" stroke-width="3.1"/><line x1="431.78" y1="0" x2="431.78" y2="435" stroke="#9fb0c7" stroke-width="2.6"/><line x1="464.86" y1="0" x2="464.86" y2="435" stroke="#9fb0c7" stroke-width="2.6"/><line x1="497.94" y1="0" x2="497.94" y2="435" stroke="#9fb0c7" stroke-width="2.6"/><line x1="531.02" y1="0" x2="531.02" y2="435" stroke="#9fb0c7" stroke-width="2.6"/><line x1="564.1" y1="0" x2="564.1" y2="435" stroke="#8595ad" stroke-width="3.1"/><line x1="597.18" y1="0" x2="597.18" y2="435" stroke="#9fb0c7" stroke-width="2.6"/><line x1="630.26" y1="0" x2="630.26" y2="435" stroke="#9fb0c7" stroke-width="2.6"/><line x1="663.34" y1="0" x2="663.34" y2="435" stroke="#9fb0c7" stroke-width="2.6"/><line x1="696.42" y1="0" x2="696.42" y2="435" stroke="#9fb0c7" stroke-width="2.6"/><line x1="729.5" y1="0" x2="729.5" y2="435" stroke="#8595ad" stroke-width="3.1"/><line x1="762.58" y1="0" x2="762.58" y2="435" stroke="#9fb0c7" stroke-width="2.6"/><line x1="0" y1="9.5" x2="771" y2="9.5" stroke="#9fb0c7" stroke-width="2.6"/><line x1="0" y1="38.4" x2="771" y2="38.4" stroke="#8595ad" stroke-width="3.1"/><line x1="0" y1="67.3" x2="771" y2="67.3" stroke="#9fb0c7" stroke-width="2.6"/><line x1="0" y1="96.2" x2="771" y2="96.2" stroke="#9fb0c7" stroke-width="2.6"/><line x1="0" y1="125.1" x2="771" y2="125.1" stroke="#9fb0c7" stroke-width="2.6"/><line x1="0" y1="154" x2="771" y2="154" stroke="#9fb0c7" stroke-width="2.6"/><line x1="0" y1="182.9" x2="771" y2="182.9" stroke="#8595ad" stroke-width="3.1"/><line x1="0" y1="211.8" x2="771" y2="211.8" stroke="#9fb0c7" stroke-width="2.6"/><line x1="0" y1="240.7" x2="771" y2="240.7" stroke="#9fb0c7" stroke-width="2.6"/><line x1="0" y1="269.6" x2="771" y2="269.6" stroke="#9fb0c7" stroke-width="2.6"/><line x1="0" y1="298.5" x2="771" y2="298.5" stroke="#9fb0c7" stroke-width="2.6"/><line x1="0" y1="327.4" x2="771" y2="327.4" stroke="#8595ad" stroke-width="3.1"/><line x1="0" y1="356.3" x2="771" y2="356.3" stroke="#9fb0c7" stroke-width="2.6"/><line x1="0" y1="385.2" x2="771" y2="385.2" stroke="#9fb0c7" stroke-width="2.6"/><line x1="0" y1="414.1" x2="771" y2="414.1" stroke="#9fb0c7" stroke-width="2.6"/></svg><div class="a" style="left:2px;top:2px;width:6px;height:431px;background:#5a5a5a"></div>
<div class="a" style="left:759px;top:2px;width:6px;height:431px;background:#5a5a5a"></div>
<div class="a" style="left:138px;top:8px;width:627px;height:5px;background:#5a5a5a"></div>
<div class="a" style="left:137px;top:2px;width:6px;height:66px;background:#5a5a5a"></div>
<div class="a" style="left:630px;top:2px;width:6px;height:66px;background:#5a5a5a"></div>
<div class="a" style="left:2px;top:63px;width:763px;height:6px;background:#5a5a5a"></div>
<div class="t" style="left:39px;top:19px;font-size:28px">6ème</div>
<div class="t" style="left:660px;top:16.7px;font-size:19px">Chapitre 6</div>
<div class="t" style="left:250px;top:17px;font-size:22.3px;font-weight:bold;font-style:italic;color:#0c246a">La définition d’une PREAO</div>
<div class="t" style="left:40px;top:82px;font-size:21px;font-weight:bold">Utilisation de ce que c’est :</div><div class="a" style="left:40px;top:103px;width:300px;height:4px;background:#000"></div><div class="a" style="left:20px;top:130px;width:443px;height:251px;border:10px solid #f0951a"></div><div class="a" style="left:80px;top:152.8px;width:340px;height:28.8px;overflow:hidden;white-space:nowrap;font-size:24px;line-height:1.2;font-weight:bold;color:#000;-webkit-text-stroke:1.5px #000">Il existe des logiciels spécialement </div><div class="a" style="left:80px;top:190.8px;width:340px;height:28.8px;overflow:hidden;white-space:nowrap;font-size:24px;line-height:1.2;font-weight:bold;color:#000;-webkit-text-stroke:1.5px #000">conçus pour réaliser ses présentations </div><div class="a" style="left:80px;top:228.8px;width:340px;height:28.8px;overflow:hidden;white-space:nowrap;font-size:24px;line-height:1.2;font-weight:bold;color:#000;-webkit-text-stroke:1.5px #000">exemple powerpoint libre office </div><div class="a" style="left:80px;top:266.8px;width:204px;height:28.8px;overflow:hidden;white-space:nowrap;font-size:24px;line-height:1.2;font-weight:bold;color:#000;-webkit-text-stroke:1.5px #000">impress Ces logiciels </div><div class="a" style="left:80px;top:312.8px;width:340px;height:28.8px;overflow:hidden;white-space:nowrap;font-size:24px;line-height:1.2;font-weight:bold;color:#000;-webkit-text-stroke:1.5px #000">Il existe des logiciels spécialement </div><div class="a" style="left:80px;top:346.8px;width:204px;height:28.8px;overflow:hidden;white-space:nowrap;font-size:24px;line-height:1.2;font-weight:bold;color:#000;-webkit-text-stroke:1.5px #000">conçus pour réaliser </div><div class="a" style="left:555px;top:88px;width:100px;height:335px;background:#f2f2f2;border:3px solid #ccc"></div><div class="a" style="left:570px;top:100px;width:70px;height:63px;background:#5b8fd0;opacity:.8"></div><div class="a" style="left:570px;top:187px;width:70px;height:59px;background:#f3a24a;opacity:.8"></div><div class="a" style="left:570px;top:270px;width:70px;height:58px;background:#b47fd8;opacity:.8"></div><div class="a" style="left:570px;top:352px;width:70px;height:61px;background:#d05a4a;opacity:.8"></div></div>
<div class="t" style="left:25px;top:245px;font-size:12.5px;color:#80808f">2</div>
<svg style="left:13.5px;top:271.5px" width="17" height="18" viewBox="0 0 17 18"><path d="M5.50 2.20L6.91 6.06L11.02 6.21L7.78 8.74L8.91 12.69L5.50 10.40L2.09 12.69L3.22 8.74L-0.02 6.21L4.09 6.06Z" fill="#f7a642" stroke="#ef8c24" stroke-width="0.9" stroke-linejoin="round"/><path d="M6.5 3.8V15.8L9.2 13.3L11.5 17.3L13.6 16.3L11.4 12.3L15.6 11.8Z" fill="#fff" stroke="#444" stroke-width="1.3" stroke-linejoin="round"/></svg>
<svg style="left:13.5px;top:289px" width="18" height="15" viewBox="0 0 18 15"><path d="M0.5 1.5H5M0.5 5H3.8M0.5 8.5H3.8M0.5 12H5" stroke="#27a84a" stroke-width="1.2"/><path d="M10.00 0.30L11.70 4.85L16.56 5.07L12.76 8.10L14.06 12.78L10.00 10.10L5.94 12.78L7.24 8.10L3.44 5.07L8.30 4.85Z" fill="#fbd890" stroke="#ef8c24" stroke-width="1.2" stroke-linejoin="round"/></svg>
<div class="a" style="left:35.5px;top:324px;width:111px;height:63px;background:#555;box-shadow:1px 1px 2px rgba(0,0,0,.35)"></div>
<div class="a mini" style="left:36.5px;top:324.5px;width:771px;height:435px;transform-origin:0 0;transform:scale(0.14137483787289234);background:#c6d9f2;overflow:hidden"><svg style="left:0;top:0" width="771" height="435" viewBox="0 0 771 435"><line x1="1.74" y1="0" x2="1.74" y2="435" stroke="#9fb0c7" stroke-width="2.6"/><line x1="34.82" y1="0" x2="34.82" y2="435" stroke="#9fb0c7" stroke-width="2.6"/><line x1="67.9" y1="0" x2="67.9" y2="435" stroke="#8595ad" stroke-width="3.1"/><line x1="100.98" y1="0" x2="100.98" y2="435" stroke="#9fb0c7" stroke-width="2.6"/><line x1="134.06" y1="0" x2="134.06" y2="435" stroke="#9fb0c7" stroke-width="2.6"/><line x1="167.14" y1="0" x2="167.14" y2="435" stroke="#9fb0c7" stroke-width="2.6"/><line x1="200.22" y1="0" x2="200.22" y2="435" stroke="#9fb0c7" stroke-width="2.6"/><line x1="233.3" y1="0" x2="233.3" y2="435" stroke="#8595ad" stroke-width="3.1"/><line x1="266.38" y1="0" x2="266.38" y2="435" stroke="#9fb0c7" stroke-width="2.6"/><line x1="299.46" y1="0" x2="299.46" y2="435" stroke="#9fb0c7" stroke-width="2.6"/><line x1="332.54" y1="0" x2="332.54" y2="435" stroke="#9fb0c7" stroke-width="2.6"/><line x1="365.62" y1="0" x2="365.62" y2="435" stroke="#9fb0c7" stroke-width="2.6"/><line x1="398.7" y1="0" x2="398.7" y2="435" stroke="#8595ad" stroke-width="3.1"/><line x1="431.78" y1="0" x2="431.78" y2="435" stroke="#9fb0c7" stroke-width="2.6"/><line x1="464.86" y1="0" x2="464.86" y2="435" stroke="#9fb0c7" stroke-width="2.6"/><line x1="497.94" y1="0" x2="497.94" y2="435" stroke="#9fb0c7" stroke-width="2.6"/><line x1="531.02" y1="0" x2="531.02" y2="435" stroke="#9fb0c7" stroke-width="2.6"/><line x1="564.1" y1="0" x2="564.1" y2="435" stroke="#8595ad" stroke-width="3.1"/><line x1="597.18" y1="0" x2="597.18" y2="435" stroke="#9fb0c7" stroke-width="2.6"/><line x1="630.26" y1="0" x2="630.26" y2="435" stroke="#9fb0c7" stroke-width="2.6"/><line x1="663.34" y1="0" x2="663.34" y2="435" stroke="#9fb0c7" stroke-width="2.6"/><line x1="696.42" y1="0" x2="696.42" y2="435" stroke="#9fb0c7" stroke-width="2.6"/><line x1="729.5" y1="0" x2="729.5" y2="435" stroke="#8595ad" stroke-width="3.1"/><line x1="762.58" y1="0" x2="762.58" y2="435" stroke="#9fb0c7" stroke-width="2.6"/><line x1="0" y1="9.5" x2="771" y2="9.5" stroke="#9fb0c7" stroke-width="2.6"/><line x1="0" y1="38.4" x2="771" y2="38.4" stroke="#8595ad" stroke-width="3.1"/><line x1="0" y1="67.3" x2="771" y2="67.3" stroke="#9fb0c7" stroke-width="2.6"/><line x1="0" y1="96.2" x2="771" y2="96.2" stroke="#9fb0c7" stroke-width="2.6"/><line x1="0" y1="125.1" x2="771" y2="125.1" stroke="#9fb0c7" stroke-width="2.6"/><line x1="0" y1="154" x2="771" y2="154" stroke="#9fb0c7" stroke-width="2.6"/><line x1="0" y1="182.9" x2="771" y2="182.9" stroke="#8595ad" stroke-width="3.1"/><line x1="0" y1="211.8" x2="771" y2="211.8" stroke="#9fb0c7" stroke-width="2.6"/><line x1="0" y1="240.7" x2="771" y2="240.7" stroke="#9fb0c7" stroke-width="2.6"/><line x1="0" y1="269.6" x2="771" y2="269.6" stroke="#9fb0c7" stroke-width="2.6"/><line x1="0" y1="298.5" x2="771" y2="298.5" stroke="#9fb0c7" stroke-width="2.6"/><line x1="0" y1="327.4" x2="771" y2="327.4" stroke="#8595ad" stroke-width="3.1"/><line x1="0" y1="356.3" x2="771" y2="356.3" stroke="#9fb0c7" stroke-width="2.6"/><line x1="0" y1="385.2" x2="771" y2="385.2" stroke="#9fb0c7" stroke-width="2.6"/><line x1="0" y1="414.1" x2="771" y2="414.1" stroke="#9fb0c7" stroke-width="2.6"/></svg><div class="a" style="left:2px;top:2px;width:6px;height:431px;background:#5a5a5a"></div>
<div class="a" style="left:759px;top:2px;width:6px;height:431px;background:#5a5a5a"></div>
<div class="a" style="left:138px;top:8px;width:627px;height:5px;background:#5a5a5a"></div>
<div class="a" style="left:137px;top:2px;width:6px;height:66px;background:#5a5a5a"></div>
<div class="a" style="left:630px;top:2px;width:6px;height:66px;background:#5a5a5a"></div>
<div class="a" style="left:2px;top:63px;width:763px;height:6px;background:#5a5a5a"></div>
<div class="t" style="left:39px;top:19px;font-size:28px">6ème</div>
<div class="t" style="left:660px;top:16.7px;font-size:19px">Chapitre 6</div>
<div class="t" style="left:250px;top:17px;font-size:22.3px;font-weight:bold;font-style:italic;color:#0c246a">La définition d’une PREAO</div>
<div class="t" style="left:40px;top:82px;font-size:21px;font-weight:bold">Utilisation de ce diaporama :</div><div class="a" style="left:40px;top:103px;width:330px;height:4px;background:#000"></div><svg style="left:50px;top:141px;overflow:visible" width="360" height="250" viewBox="0 0 360 250"><path d="M40 3H320Q357 3 357 115.0L375 69L357 140.0Q357 247 320 247H40Q3 247 3 125.0Q3 3 40 3Z" fill="#6b9ad2" stroke="#3f6ea8" stroke-width="5"/></svg><div class="a" style="left:90px;top:157.3px;width:280px;height:22.8px;overflow:hidden;white-space:nowrap;text-align:center;font-size:19px;line-height:1.2;font-weight:bold;color:#111;-webkit-text-stroke:1.5px #111">Il existe des logiciels spécialement </div><div class="a" style="left:90px;top:199.3px;width:280px;height:22.8px;overflow:hidden;white-space:nowrap;text-align:center;font-size:19px;line-height:1.2;font-weight:bold;color:#111;-webkit-text-stroke:1.5px #111">conçus pour réaliser ses présentations </div><div class="a" style="left:90px;top:241.3px;width:280px;height:22.8px;overflow:hidden;white-space:nowrap;text-align:center;font-size:19px;line-height:1.2;font-weight:bold;color:#111;-webkit-text-stroke:1.5px #111">exemple powerpoint libre office </div><div class="a" style="left:90px;top:283.3px;width:280px;height:22.8px;overflow:hidden;white-space:nowrap;text-align:center;font-size:19px;line-height:1.2;font-weight:bold;color:#111;-webkit-text-stroke:1.5px #111">impress Ces logiciels permettent </div><div class="a" style="left:90px;top:325.3px;width:140px;height:22.8px;overflow:hidden;white-space:nowrap;text-align:center;font-size:19px;line-height:1.2;font-weight:bold;color:#111;-webkit-text-stroke:1.5px #111">de concevoir des </div><div class="a" style="left:403px;top:166px;width:351px;height:195px;background:#2a1f6e;border:3px solid #d8d8d8;overflow:hidden"><div class="a" style="left:30px;top:30px;width:150px;height:40px;background:#c03ea8"></div><div class="a" style="left:180px;top:110px;width:130px;height:70px;background:#3e8f9a"></div><div class="a" style="left:90px;top:8px;width:180px;height:10px;background:#e8c040"></div></div></div>
<div class="t" style="left:25px;top:326px;font-size:12.5px;color:#80808f">3</div>
<svg style="left:13.5px;top:370px" width="18" height="15" viewBox="0 0 18 15"><path d="M0.5 1.5H5M0.5 5H3.8M0.5 8.5H3.8M0.5 12H5" stroke="#27a84a" stroke-width="1.2"/><path d="M10.00 0.30L11.70 4.85L16.56 5.07L12.76 8.10L14.06 12.78L10.00 10.10L5.94 12.78L7.24 8.10L3.44 5.07L8.30 4.85Z" fill="#fbd890" stroke="#ef8c24" stroke-width="1.2" stroke-linejoin="round"/></svg>
<div class="a" style="left:35.5px;top:405px;width:111px;height:63px;background:#555;box-shadow:1px 1px 2px rgba(0,0,0,.35)"></div>
<div class="a mini" style="left:36.5px;top:405.5px;width:771px;height:435px;transform-origin:0 0;transform:scale(0.14137483787289234);background:#c6d9f2;overflow:hidden"><svg style="left:0;top:0" width="771" height="435" viewBox="0 0 771 435"><line x1="1.74" y1="0" x2="1.74" y2="435" stroke="#9fb0c7" stroke-width="2.6"/><line x1="34.82" y1="0" x2="34.82" y2="435" stroke="#9fb0c7" stroke-width="2.6"/><line x1="67.9" y1="0" x2="67.9" y2="435" stroke="#8595ad" stroke-width="3.1"/><line x1="100.98" y1="0" x2="100.98" y2="435" stroke="#9fb0c7" stroke-width="2.6"/><line x1="134.06" y1="0" x2="134.06" y2="435" stroke="#9fb0c7" stroke-width="2.6"/><line x1="167.14" y1="0" x2="167.14" y2="435" stroke="#9fb0c7" stroke-width="2.6"/><line x1="200.22" y1="0" x2="200.22" y2="435" stroke="#9fb0c7" stroke-width="2.6"/><line x1="233.3" y1="0" x2="233.3" y2="435" stroke="#8595ad" stroke-width="3.1"/><line x1="266.38" y1="0" x2="266.38" y2="435" stroke="#9fb0c7" stroke-width="2.6"/><line x1="299.46" y1="0" x2="299.46" y2="435" stroke="#9fb0c7" stroke-width="2.6"/><line x1="332.54" y1="0" x2="332.54" y2="435" stroke="#9fb0c7" stroke-width="2.6"/><line x1="365.62" y1="0" x2="365.62" y2="435" stroke="#9fb0c7" stroke-width="2.6"/><line x1="398.7" y1="0" x2="398.7" y2="435" stroke="#8595ad" stroke-width="3.1"/><line x1="431.78" y1="0" x2="431.78" y2="435" stroke="#9fb0c7" stroke-width="2.6"/><line x1="464.86" y1="0" x2="464.86" y2="435" stroke="#9fb0c7" stroke-width="2.6"/><line x1="497.94" y1="0" x2="497.94" y2="435" stroke="#9fb0c7" stroke-width="2.6"/><line x1="531.02" y1="0" x2="531.02" y2="435" stroke="#9fb0c7" stroke-width="2.6"/><line x1="564.1" y1="0" x2="564.1" y2="435" stroke="#8595ad" stroke-width="3.1"/><line x1="597.18" y1="0" x2="597.18" y2="435" stroke="#9fb0c7" stroke-width="2.6"/><line x1="630.26" y1="0" x2="630.26" y2="435" stroke="#9fb0c7" stroke-width="2.6"/><line x1="663.34" y1="0" x2="663.34" y2="435" stroke="#9fb0c7" stroke-width="2.6"/><line x1="696.42" y1="0" x2="696.42" y2="435" stroke="#9fb0c7" stroke-width="2.6"/><line x1="729.5" y1="0" x2="729.5" y2="435" stroke="#8595ad" stroke-width="3.1"/><line x1="762.58" y1="0" x2="762.58" y2="435" stroke="#9fb0c7" stroke-width="2.6"/><line x1="0" y1="9.5" x2="771" y2="9.5" stroke="#9fb0c7" stroke-width="2.6"/><line x1="0" y1="38.4" x2="771" y2="38.4" stroke="#8595ad" stroke-width="3.1"/><line x1="0" y1="67.3" x2="771" y2="67.3" stroke="#9fb0c7" stroke-width="2.6"/><line x1="0" y1="96.2" x2="771" y2="96.2" stroke="#9fb0c7" stroke-width="2.6"/><line x1="0" y1="125.1" x2="771" y2="125.1" stroke="#9fb0c7" stroke-width="2.6"/><line x1="0" y1="154" x2="771" y2="154" stroke="#9fb0c7" stroke-width="2.6"/><line x1="0" y1="182.9" x2="771" y2="182.9" stroke="#8595ad" stroke-width="3.1"/><line x1="0" y1="211.8" x2="771" y2="211.8" stroke="#9fb0c7" stroke-width="2.6"/><line x1="0" y1="240.7" x2="771" y2="240.7" stroke="#9fb0c7" stroke-width="2.6"/><line x1="0" y1="269.6" x2="771" y2="269.6" stroke="#9fb0c7" stroke-width="2.6"/><line x1="0" y1="298.5" x2="771" y2="298.5" stroke="#9fb0c7" stroke-width="2.6"/><line x1="0" y1="327.4" x2="771" y2="327.4" stroke="#8595ad" stroke-width="3.1"/><line x1="0" y1="356.3" x2="771" y2="356.3" stroke="#9fb0c7" stroke-width="2.6"/><line x1="0" y1="385.2" x2="771" y2="385.2" stroke="#9fb0c7" stroke-width="2.6"/><line x1="0" y1="414.1" x2="771" y2="414.1" stroke="#9fb0c7" stroke-width="2.6"/></svg><div class="a" style="left:2px;top:2px;width:6px;height:431px;background:#5a5a5a"></div>
<div class="a" style="left:759px;top:2px;width:6px;height:431px;background:#5a5a5a"></div>
<div class="a" style="left:138px;top:8px;width:627px;height:5px;background:#5a5a5a"></div>
<div class="a" style="left:137px;top:2px;width:6px;height:66px;background:#5a5a5a"></div>
<div class="a" style="left:630px;top:2px;width:6px;height:66px;background:#5a5a5a"></div>
<div class="a" style="left:2px;top:63px;width:763px;height:6px;background:#5a5a5a"></div>
<div class="t" style="left:39px;top:19px;font-size:28px">6ème</div>
<div class="t" style="left:660px;top:16.7px;font-size:19px">Chapitre 6</div>
<div class="t" style="left:250px;top:17px;font-size:22.3px;font-weight:bold;font-style:italic;color:#0c246a">La définition d’une PREAO</div>
<div class="t" style="left:40px;top:82px;font-size:21px;font-weight:bold">Utilisation de ce diaporama :</div><div class="a" style="left:40px;top:103px;width:330px;height:4px;background:#000"></div><svg style="left:28px;top:110px;overflow:visible" width="470" height="107" viewBox="0 0 470 107"><path d="M40 3H430Q467 3 467 43.5L522 70L467 68.5Q467 104 430 104H40Q3 104 3 53.5Q3 3 40 3Z" fill="#6b9ad2" stroke="#3f6ea8" stroke-width="5"/></svg><div class="a" style="left:68px;top:126.3px;width:390px;height:22.8px;overflow:hidden;white-space:nowrap;text-align:center;font-size:19px;line-height:1.2;font-weight:bold;color:#111;-webkit-text-stroke:1.5px #111">Il existe des logiciels spécialement conçus </div><div class="a" style="left:68px;top:149.3px;width:390px;height:22.8px;overflow:hidden;white-space:nowrap;text-align:center;font-size:19px;line-height:1.2;font-weight:bold;color:#111;-webkit-text-stroke:1.5px #111">pour réaliser ses présentations exemple powerpoint </div><div class="a" style="left:68px;top:172.3px;width:195px;height:22.8px;overflow:hidden;white-space:nowrap;text-align:center;font-size:19px;line-height:1.2;font-weight:bold;color:#111;-webkit-text-stroke:1.5px #111">libre office impress </div><div class="a" style="left:30px;top:225px;width:460px;height:53px;background:#fff"></div><div class="a" style="left:45px;top:230.2px;width:420px;height:19.2px;overflow:hidden;white-space:nowrap;font-size:16px;line-height:1.2;font-weight:bold;color:#c00000;-webkit-text-stroke:1.5px #c00000">Il existe des logiciels spécialement conçus pour réaliser </div><div class="a" style="left:45px;top:252.2px;width:294px;height:19.2px;overflow:hidden;white-space:nowrap;font-size:16px;line-height:1.2;font-weight:bold;color:#c00000;-webkit-text-stroke:1.5px #c00000">ses présentations exemple powerpoint </div><div class="a" style="left:30px;top:288px;width:460px;height:48px;background:#fff"></div><div class="a" style="left:45px;top:293.2px;width:420px;height:19.2px;overflow:hidden;white-space:nowrap;font-size:16px;line-height:1.2;font-weight:bold;color:#c00000;-webkit-text-stroke:1.5px #c00000">Il existe des logiciels spécialement conçus pour réaliser </div><div class="a" style="left:45px;top:315.2px;width:294px;height:19.2px;overflow:hidden;white-space:nowrap;font-size:16px;line-height:1.2;font-weight:bold;color:#c00000;-webkit-text-stroke:1.5px #c00000">ses présentations exemple powerpoint </div><div class="a" style="left:30px;top:358px;width:460px;height:62px;background:#fff"></div><div class="a" style="left:45px;top:363.2px;width:420px;height:19.2px;overflow:hidden;white-space:nowrap;font-size:16px;line-height:1.2;font-weight:bold;color:#c00000;-webkit-text-stroke:1.5px #c00000">Il existe des logiciels spécialement conçus pour réaliser </div><div class="a" style="left:45px;top:385.2px;width:294px;height:19.2px;overflow:hidden;white-space:nowrap;font-size:16px;line-height:1.2;font-weight:bold;color:#c00000;-webkit-text-stroke:1.5px #c00000">ses présentations exemple powerpoint </div><div class="a" style="left:570px;top:90px;width:115px;height:335px;background:#f2f2f2;border:3px solid #ccc"></div><div class="a" style="left:585px;top:105px;width:85px;height:50px;background:#5b8fd0"></div><div class="a" style="left:585px;top:185px;width:85px;height:50px;background:#9fc2e8"></div><div class="a" style="left:585px;top:265px;width:85px;height:50px;background:#7fb0e0"></div><div class="a" style="left:585px;top:345px;width:85px;height:50px;background:#5b8fd0"></div></div>
<div class="t" style="left:25px;top:407px;font-size:12.5px;color:#80808f">4</div>
<svg style="left:13.5px;top:433.5px" width="17" height="18" viewBox="0 0 17 18"><path d="M5.50 2.20L6.91 6.06L11.02 6.21L7.78 8.74L8.91 12.69L5.50 10.40L2.09 12.69L3.22 8.74L-0.02 6.21L4.09 6.06Z" fill="#f7a642" stroke="#ef8c24" stroke-width="0.9" stroke-linejoin="round"/><path d="M6.5 3.8V15.8L9.2 13.3L11.5 17.3L13.6 16.3L11.4 12.3L15.6 11.8Z" fill="#fff" stroke="#444" stroke-width="1.3" stroke-linejoin="round"/></svg>
<svg style="left:13.5px;top:451px" width="18" height="15" viewBox="0 0 18 15"><path d="M0.5 1.5H5M0.5 5H3.8M0.5 8.5H3.8M0.5 12H5" stroke="#27a84a" stroke-width="1.2"/><path d="M10.00 0.30L11.70 4.85L16.56 5.07L12.76 8.10L14.06 12.78L10.00 10.10L5.94 12.78L7.24 8.10L3.44 5.07L8.30 4.85Z" fill="#fbd890" stroke="#ef8c24" stroke-width="1.2" stroke-linejoin="round"/></svg>
<div class="a" style="left:35.5px;top:486px;width:111px;height:63px;background:#555;box-shadow:1px 1px 2px rgba(0,0,0,.35)"></div>
<div class="a mini" style="left:36.5px;top:486.5px;width:771px;height:435px;transform-origin:0 0;transform:scale(0.14137483787289234);background:#c6d9f2;overflow:hidden"><svg style="left:0;top:0" width="771" height="435" viewBox="0 0 771 435"><line x1="1.74" y1="0" x2="1.74" y2="435" stroke="#9fb0c7" stroke-width="2.6"/><line x1="34.82" y1="0" x2="34.82" y2="435" stroke="#9fb0c7" stroke-width="2.6"/><line x1="67.9" y1="0" x2="67.9" y2="435" stroke="#8595ad" stroke-width="3.1"/><line x1="100.98" y1="0" x2="100.98" y2="435" stroke="#9fb0c7" stroke-width="2.6"/><line x1="134.06" y1="0" x2="134.06" y2="435" stroke="#9fb0c7" stroke-width="2.6"/><line x1="167.14" y1="0" x2="167.14" y2="435" stroke="#9fb0c7" stroke-width="2.6"/><line x1="200.22" y1="0" x2="200.22" y2="435" stroke="#9fb0c7" stroke-width="2.6"/><line x1="233.3" y1="0" x2="233.3" y2="435" stroke="#8595ad" stroke-width="3.1"/><line x1="266.38" y1="0" x2="266.38" y2="435" stroke="#9fb0c7" stroke-width="2.6"/><line x1="299.46" y1="0" x2="299.46" y2="435" stroke="#9fb0c7" stroke-width="2.6"/><line x1="332.54" y1="0" x2="332.54" y2="435" stroke="#9fb0c7" stroke-width="2.6"/><line x1="365.62" y1="0" x2="365.62" y2="435" stroke="#9fb0c7" stroke-width="2.6"/><line x1="398.7" y1="0" x2="398.7" y2="435" stroke="#8595ad" stroke-width="3.1"/><line x1="431.78" y1="0" x2="431.78" y2="435" stroke="#9fb0c7" stroke-width="2.6"/><line x1="464.86" y1="0" x2="464.86" y2="435" stroke="#9fb0c7" stroke-width="2.6"/><line x1="497.94" y1="0" x2="497.94" y2="435" stroke="#9fb0c7" stroke-width="2.6"/><line x1="531.02" y1="0" x2="531.02" y2="435" stroke="#9fb0c7" stroke-width="2.6"/><line x1="564.1" y1="0" x2="564.1" y2="435" stroke="#8595ad" stroke-width="3.1"/><line x1="597.18" y1="0" x2="597.18" y2="435" stroke="#9fb0c7" stroke-width="2.6"/><line x1="630.26" y1="0" x2="630.26" y2="435" stroke="#9fb0c7" stroke-width="2.6"/><line x1="663.34" y1="0" x2="663.34" y2="435" stroke="#9fb0c7" stroke-width="2.6"/><line x1="696.42" y1="0" x2="696.42" y2="435" stroke="#9fb0c7" stroke-width="2.6"/><line x1="729.5" y1="0" x2="729.5" y2="435" stroke="#8595ad" stroke-width="3.1"/><line x1="762.58" y1="0" x2="762.58" y2="435" stroke="#9fb0c7" stroke-width="2.6"/><line x1="0" y1="9.5" x2="771" y2="9.5" stroke="#9fb0c7" stroke-width="2.6"/><line x1="0" y1="38.4" x2="771" y2="38.4" stroke="#8595ad" stroke-width="3.1"/><line x1="0" y1="67.3" x2="771" y2="67.3" stroke="#9fb0c7" stroke-width="2.6"/><line x1="0" y1="96.2" x2="771" y2="96.2" stroke="#9fb0c7" stroke-width="2.6"/><line x1="0" y1="125.1" x2="771" y2="125.1" stroke="#9fb0c7" stroke-width="2.6"/><line x1="0" y1="154" x2="771" y2="154" stroke="#9fb0c7" stroke-width="2.6"/><line x1="0" y1="182.9" x2="771" y2="182.9" stroke="#8595ad" stroke-width="3.1"/><line x1="0" y1="211.8" x2="771" y2="211.8" stroke="#9fb0c7" stroke-width="2.6"/><line x1="0" y1="240.7" x2="771" y2="240.7" stroke="#9fb0c7" stroke-width="2.6"/><line x1="0" y1="269.6" x2="771" y2="269.6" stroke="#9fb0c7" stroke-width="2.6"/><line x1="0" y1="298.5" x2="771" y2="298.5" stroke="#9fb0c7" stroke-width="2.6"/><line x1="0" y1="327.4" x2="771" y2="327.4" stroke="#8595ad" stroke-width="3.1"/><line x1="0" y1="356.3" x2="771" y2="356.3" stroke="#9fb0c7" stroke-width="2.6"/><line x1="0" y1="385.2" x2="771" y2="385.2" stroke="#9fb0c7" stroke-width="2.6"/><line x1="0" y1="414.1" x2="771" y2="414.1" stroke="#9fb0c7" stroke-width="2.6"/></svg><div class="a" style="left:2px;top:2px;width:6px;height:431px;background:#5a5a5a"></div>
<div class="a" style="left:759px;top:2px;width:6px;height:431px;background:#5a5a5a"></div>
<div class="a" style="left:138px;top:8px;width:627px;height:5px;background:#5a5a5a"></div>
<div class="a" style="left:137px;top:2px;width:6px;height:66px;background:#5a5a5a"></div>
<div class="a" style="left:630px;top:2px;width:6px;height:66px;background:#5a5a5a"></div>
<div class="a" style="left:2px;top:63px;width:763px;height:6px;background:#5a5a5a"></div>
<div class="t" style="left:39px;top:19px;font-size:28px">6ème</div>
<div class="t" style="left:660px;top:16.7px;font-size:19px">Chapitre 6</div>
<div class="t" style="left:250px;top:17px;font-size:22.3px;font-weight:bold;font-style:italic;color:#0c246a">La définition d’une PREAO</div>
<div class="t" style="left:40px;top:82px;font-size:21px;font-weight:bold">Utilisation de ce diaporama :</div><div class="a" style="left:40px;top:103px;width:330px;height:4px;background:#000"></div><svg style="left:28px;top:124px;overflow:visible" width="514" height="159" viewBox="0 0 514 159"><path d="M40 3H474Q511 3 511 69.5L572 76L511 94.5Q511 156 474 156H40Q3 156 3 79.5Q3 3 40 3Z" fill="#6b9ad2" stroke="#3f6ea8" stroke-width="5"/></svg><div class="a" style="left:68px;top:140.3px;width:434px;height:22.8px;overflow:hidden;white-space:nowrap;text-align:center;font-size:19px;line-height:1.2;font-weight:bold;color:#111;-webkit-text-stroke:1.5px #111">Il existe des logiciels spécialement conçus pour </div><div class="a" style="left:68px;top:170.3px;width:434px;height:22.8px;overflow:hidden;white-space:nowrap;text-align:center;font-size:19px;line-height:1.2;font-weight:bold;color:#111;-webkit-text-stroke:1.5px #111">réaliser ses présentations exemple powerpoint </div><div class="a" style="left:68px;top:200.3px;width:434px;height:22.8px;overflow:hidden;white-space:nowrap;text-align:center;font-size:19px;line-height:1.2;font-weight:bold;color:#111;-webkit-text-stroke:1.5px #111">libre office impress Ces logiciels permettent </div><div class="a" style="left:68px;top:230.3px;width:217px;height:22.8px;overflow:hidden;white-space:nowrap;text-align:center;font-size:19px;line-height:1.2;font-weight:bold;color:#111;-webkit-text-stroke:1.5px #111">de concevoir des diaporamas </div><svg style="left:28px;top:313px;overflow:visible" width="460" height="84" viewBox="0 0 460 84"><path d="M40 3H420Q457 3 457 32.0L492 27L457 57.0Q457 81 420 81H40Q3 81 3 42.0Q3 3 40 3Z" fill="#6b9ad2" stroke="#3f6ea8" stroke-width="5"/></svg><div class="a" style="left:68px;top:329.3px;width:380px;height:22.8px;overflow:hidden;white-space:nowrap;text-align:center;font-size:19px;line-height:1.2;font-weight:bold;color:#111;-webkit-text-stroke:1.5px #111">Il existe des logiciels spécialement conçus </div><div class="a" style="left:68px;top:353.3px;width:190px;height:22.8px;overflow:hidden;white-space:nowrap;text-align:center;font-size:19px;line-height:1.2;font-weight:bold;color:#111;-webkit-text-stroke:1.5px #111">pour réaliser ses présentations </div><div class="a" style="left:522px;top:95px;width:215px;height:115px;background:#3a1a6a;border:3px solid #d8d8d8;overflow:hidden"><div class="a" style="left:25px;top:30px;width:160px;height:60px;background:#a9b9b0"></div></div><div class="a" style="left:538px;top:291px;width:207px;height:114px;background:#2a1f6e;border:3px solid #d8d8d8;overflow:hidden"><div class="a" style="left:120px;top:20px;width:60px;height:70px;background:#d8c690"></div><div class="a" style="left:20px;top:50px;width:70px;height:25px;background:#c03ea8"></div></div></div>
<div class="t" style="left:25px;top:488px;font-size:12.5px;color:#80808f">5</div>
<svg style="left:13.5px;top:514.5px" width="17" height="18" viewBox="0 0 17 18"><path d="M5.50 2.20L6.91 6.06L11.02 6.21L7.78 8.74L8.91 12.69L5.50 10.40L2.09 12.69L3.22 8.74L-0.02 6.21L4.09 6.06Z" fill="#f7a642" stroke="#ef8c24" stroke-width="0.9" stroke-linejoin="round"/><path d="M6.5 3.8V15.8L9.2 13.3L11.5 17.3L13.6 16.3L11.4 12.3L15.6 11.8Z" fill="#fff" stroke="#444" stroke-width="1.3" stroke-linejoin="round"/></svg>
<svg style="left:13.5px;top:532px" width="18" height="15" viewBox="0 0 18 15"><path d="M0.5 1.5H5M0.5 5H3.8M0.5 8.5H3.8M0.5 12H5" stroke="#27a84a" stroke-width="1.2"/><path d="M10.00 0.30L11.70 4.85L16.56 5.07L12.76 8.10L14.06 12.78L10.00 10.10L5.94 12.78L7.24 8.10L3.44 5.07L8.30 4.85Z" fill="#fbd890" stroke="#ef8c24" stroke-width="1.2" stroke-linejoin="round"/></svg>
<div class="a" style="left:35.5px;top:567px;width:111px;height:63px;background:#555;box-shadow:1px 1px 2px rgba(0,0,0,.35)"></div>
<div class="a mini" style="left:36.5px;top:567.5px;width:771px;height:435px;transform-origin:0 0;transform:scale(0.14137483787289234);background:#c6d9f2;overflow:hidden"><svg style="left:0;top:0" width="771" height="435" viewBox="0 0 771 435"><line x1="1.74" y1="0" x2="1.74" y2="435" stroke="#9fb0c7" stroke-width="2.6"/><line x1="34.82" y1="0" x2="34.82" y2="435" stroke="#9fb0c7" stroke-width="2.6"/><line x1="67.9" y1="0" x2="67.9" y2="435" stroke="#8595ad" stroke-width="3.1"/><line x1="100.98" y1="0" x2="100.98" y2="435" stroke="#9fb0c7" stroke-width="2.6"/><line x1="134.06" y1="0" x2="134.06" y2="435" stroke="#9fb0c7" stroke-width="2.6"/><line x1="167.14" y1="0" x2="167.14" y2="435" stroke="#9fb0c7" stroke-width="2.6"/><line x1="200.22" y1="0" x2="200.22" y2="435" stroke="#9fb0c7" stroke-width="2.6"/><line x1="233.3" y1="0" x2="233.3" y2="435" stroke="#8595ad" stroke-width="3.1"/><line x1="266.38" y1="0" x2="266.38" y2="435" stroke="#9fb0c7" stroke-width="2.6"/><line x1="299.46" y1="0" x2="299.46" y2="435" stroke="#9fb0c7" stroke-width="2.6"/><line x1="332.54" y1="0" x2="332.54" y2="435" stroke="#9fb0c7" stroke-width="2.6"/><line x1="365.62" y1="0" x2="365.62" y2="435" stroke="#9fb0c7" stroke-width="2.6"/><line x1="398.7" y1="0" x2="398.7" y2="435" stroke="#8595ad" stroke-width="3.1"/><line x1="431.78" y1="0" x2="431.78" y2="435" stroke="#9fb0c7" stroke-width="2.6"/><line x1="464.86" y1="0" x2="464.86" y2="435" stroke="#9fb0c7" stroke-width="2.6"/><line x1="497.94" y1="0" x2="497.94" y2="435" stroke="#9fb0c7" stroke-width="2.6"/><line x1="531.02" y1="0" x2="531.02" y2="435" stroke="#9fb0c7" stroke-width="2.6"/><line x1="564.1" y1="0" x2="564.1" y2="435" stroke="#8595ad" stroke-width="3.1"/><line x1="597.18" y1="0" x2="597.18" y2="435" stroke="#9fb0c7" stroke-width="2.6"/><line x1="630.26" y1="0" x2="630.26" y2="435" stroke="#9fb0c7" stroke-width="2.6"/><line x1="663.34" y1="0" x2="663.34" y2="435" stroke="#9fb0c7" stroke-width="2.6"/><line x1="696.42" y1="0" x2="696.42" y2="435" stroke="#9fb0c7" stroke-width="2.6"/><line x1="729.5" y1="0" x2="729.5" y2="435" stroke="#8595ad" stroke-width="3.1"/><line x1="762.58" y1="0" x2="762.58" y2="435" stroke="#9fb0c7" stroke-width="2.6"/><line x1="0" y1="9.5" x2="771" y2="9.5" stroke="#9fb0c7" stroke-width="2.6"/><line x1="0" y1="38.4" x2="771" y2="38.4" stroke="#8595ad" stroke-width="3.1"/><line x1="0" y1="67.3" x2="771" y2="67.3" stroke="#9fb0c7" stroke-width="2.6"/><line x1="0" y1="96.2" x2="771" y2="96.2" stroke="#9fb0c7" stroke-width="2.6"/><line x1="0" y1="125.1" x2="771" y2="125.1" stroke="#9fb0c7" stroke-width="2.6"/><line x1="0" y1="154" x2="771" y2="154" stroke="#9fb0c7" stroke-width="2.6"/><line x1="0" y1="182.9" x2="771" y2="182.9" stroke="#8595ad" stroke-width="3.1"/><line x1="0" y1="211.8" x2="771" y2="211.8" stroke="#9fb0c7" stroke-width="2.6"/><line x1="0" y1="240.7" x2="771" y2="240.7" stroke="#9fb0c7" stroke-width="2.6"/><line x1="0" y1="269.6" x2="771" y2="269.6" stroke="#9fb0c7" stroke-width="2.6"/><line x1="0" y1="298.5" x2="771" y2="298.5" stroke="#9fb0c7" stroke-width="2.6"/><line x1="0" y1="327.4" x2="771" y2="327.4" stroke="#8595ad" stroke-width="3.1"/><line x1="0" y1="356.3" x2="771" y2="356.3" stroke="#9fb0c7" stroke-width="2.6"/><line x1="0" y1="385.2" x2="771" y2="385.2" stroke="#9fb0c7" stroke-width="2.6"/><line x1="0" y1="414.1" x2="771" y2="414.1" stroke="#9fb0c7" stroke-width="2.6"/></svg><div class="a" style="left:2px;top:2px;width:6px;height:431px;background:#5a5a5a"></div>
<div class="a" style="left:759px;top:2px;width:6px;height:431px;background:#5a5a5a"></div>
<div class="a" style="left:138px;top:8px;width:627px;height:5px;background:#5a5a5a"></div>
<div class="a" style="left:137px;top:2px;width:6px;height:66px;background:#5a5a5a"></div>
<div class="a" style="left:630px;top:2px;width:6px;height:66px;background:#5a5a5a"></div>
<div class="a" style="left:2px;top:63px;width:763px;height:6px;background:#5a5a5a"></div>
<div class="t" style="left:39px;top:19px;font-size:28px">6ème</div>
<div class="t" style="left:660px;top:16.7px;font-size:19px">Chapitre 6</div>
<div class="t" style="left:250px;top:17px;font-size:22.3px;font-weight:bold;font-style:italic;color:#0c246a">La définition d’une PREAO</div>
<div class="t" style="left:40px;top:82px;font-size:21px;font-weight:bold">Utilisation de ce diaporama :</div><div class="a" style="left:40px;top:103px;width:330px;height:4px;background:#000"></div><div class="a" style="left:40px;top:112.6px;width:288px;height:21.6px;overflow:hidden;white-space:nowrap;font-size:18px;line-height:1.2;font-weight:bold;color:#000;-webkit-text-stroke:1.5px #000">Il existe des logiciels spécialement </div><svg style="left:23px;top:153px;overflow:visible" width="499" height="89" viewBox="0 0 499 89"><path d="M40 3H459Q496 3 496 34.5L522 47L496 59.5Q496 86 459 86H40Q3 86 3 44.5Q3 3 40 3Z" fill="#6b9ad2" stroke="#3f6ea8" stroke-width="5"/></svg><div class="a" style="left:63px;top:169.3px;width:419px;height:22.8px;overflow:hidden;white-space:nowrap;text-align:center;font-size:19px;line-height:1.2;font-weight:bold;color:#111;-webkit-text-stroke:1.5px #111">Il existe des logiciels spécialement conçus pour </div><div class="a" style="left:63px;top:195.3px;width:209.5px;height:22.8px;overflow:hidden;white-space:nowrap;text-align:center;font-size:19px;line-height:1.2;font-weight:bold;color:#111;-webkit-text-stroke:1.5px #111">réaliser ses présentations </div><svg style="left:23px;top:252px;overflow:visible" width="499" height="156" viewBox="0 0 499 156"><path d="M40 3H459Q496 3 496 68.0L522 88L496 93.0Q496 153 459 153H40Q3 153 3 78.0Q3 3 40 3Z" fill="#6b9ad2" stroke="#3f6ea8" stroke-width="5"/></svg><div class="a" style="left:63px;top:268.3px;width:419px;height:22.8px;overflow:hidden;white-space:nowrap;text-align:center;font-size:19px;line-height:1.2;font-weight:bold;color:#111;-webkit-text-stroke:1.5px #111">Il existe des logiciels spécialement conçus pour </div><div class="a" style="left:63px;top:298.3px;width:419px;height:22.8px;overflow:hidden;white-space:nowrap;text-align:center;font-size:19px;line-height:1.2;font-weight:bold;color:#111;-webkit-text-stroke:1.5px #111">réaliser ses présentations exemple powerpoint </div><div class="a" style="left:63px;top:328.3px;width:419px;height:22.8px;overflow:hidden;white-space:nowrap;text-align:center;font-size:19px;line-height:1.2;font-weight:bold;color:#111;-webkit-text-stroke:1.5px #111">libre office impress Ces logiciels permettent </div><div class="a" style="left:63px;top:358.3px;width:209.5px;height:22.8px;overflow:hidden;white-space:nowrap;text-align:center;font-size:19px;line-height:1.2;font-weight:bold;color:#111;-webkit-text-stroke:1.5px #111">de concevoir des diaporamas </div><div class="a" style="left:514px;top:132px;width:231px;height:132px;background:#2c1a6a;border:3px solid #d8d8d8;overflow:hidden"><div class="a" style="left:30px;top:35px;width:170px;height:14px;background:#c6a0d8"></div></div><div class="a" style="left:518px;top:278px;width:222px;height:121px;background:#2a1f6e;border:3px solid #d8d8d8;overflow:hidden"><div class="a" style="left:80px;top:50px;width:65px;height:55px;background:#7fd0e8"></div></div></div>
<div class="t" style="left:25px;top:569px;font-size:12.5px;color:#80808f">6</div>
<svg style="left:13.5px;top:595.5px" width="17" height="18" viewBox="0 0 17 18"><path d="M5.50 2.20L6.91 6.06L11.02 6.21L7.78 8.74L8.91 12.69L5.50 10.40L2.09 12.69L3.22 8.74L-0.02 6.21L4.09 6.06Z" fill="#f7a642" stroke="#ef8c24" stroke-width="0.9" stroke-linejoin="round"/><path d="M6.5 3.8V15.8L9.2 13.3L11.5 17.3L13.6 16.3L11.4 12.3L15.6 11.8Z" fill="#fff" stroke="#444" stroke-width="1.3" stroke-linejoin="round"/></svg>
<svg style="left:13.5px;top:613px" width="18" height="15" viewBox="0 0 18 15"><path d="M0.5 1.5H5M0.5 5H3.8M0.5 8.5H3.8M0.5 12H5" stroke="#27a84a" stroke-width="1.2"/><path d="M10.00 0.30L11.70 4.85L16.56 5.07L12.76 8.10L14.06 12.78L10.00 10.10L5.94 12.78L7.24 8.10L3.44 5.07L8.30 4.85Z" fill="#fbd890" stroke="#ef8c24" stroke-width="1.2" stroke-linejoin="round"/></svg>
<div class="a" style="left:180px;top:378px;width:7px;height:73px;background:#6b6b6b"></div>
<svg style="left:181px;top:410px" width="6" height="9" viewBox="0 0 6 9"><path d="M5 0.5L0.5 4.5L5 8.5Z" fill="#fff"/></svg>

<!-- CANVAS -->
<div class="a" style="left:189px;top:124px;width:803px;height:565px;background:#e0e0e0"></div>
<div class="a" style="left:992px;top:124px;width:1px;height:565px;background:#fafafa"></div>
<div class="a" style="left:993px;top:235px;width:15px;height:347px;background:#cdcdcd"></div>
<svg style="left:996px;top:130px" width="9" height="6" viewBox="0 0 9 6"><path d="M1 5L4.5 1.5L8 5" fill="none" stroke="#555" stroke-width="1.6"/></svg>
<svg style="left:996px;top:677px" width="9" height="6" viewBox="0 0 9 6"><path d="M1 1L4.5 4.5L8 1" fill="none" stroke="#555" stroke-width="1.6"/></svg>
<div class="a" style="left:189px;top:689px;width:803px;height:1px;background:#fafafa"></div>
<div class="a" style="left:457px;top:690px;width:268px;height:4px;background:#cdcdcd"></div>
<div class="a" style="left:1009px;top:124px;width:1px;height:570px;background:#a0a0a0"></div>
<div class="a" style="left:1009px;top:378px;width:7px;height:73px;background:#6b6b6b"></div>
<svg style="left:1010px;top:410px" width="6" height="8" viewBox="0 0 6 8"><path d="M0 0L5 4L0 8Z" fill="#fff"/></svg>

<div class="a slide" style="left:200px;top:185px;width:771px;height:435px;background:#c8dbf3;overflow:hidden;box-shadow:1px 1px 1px rgba(0,0,0,.25)"><svg style="left:0;top:0" width="771" height="435" viewBox="0 0 771 435"><line x1="8.36" y1="0" x2="8.36" y2="435" stroke="#bdd0e9" stroke-width="0.9"/><line x1="14.97" y1="0" x2="14.97" y2="435" stroke="#bdd0e9" stroke-width="0.9"/><line x1="21.59" y1="0" x2="21.59" y2="435" stroke="#bdd0e9" stroke-width="0.9"/><line x1="28.2" y1="0" x2="28.2" y2="435" stroke="#bdd0e9" stroke-width="0.9"/><line x1="41.44" y1="0" x2="41.44" y2="435" stroke="#bdd0e9" stroke-width="0.9"/><line x1="48.05" y1="0" x2="48.05" y2="435" stroke="#bdd0e9" stroke-width="0.9"/><line x1="54.67" y1="0" x2="54.67" y2="435" stroke="#bdd0e9" stroke-width="0.9"/><line x1="61.28" y1="0" x2="61.28" y2="435" stroke="#bdd0e9" stroke-width="0.9"/><line x1="74.52" y1="0" x2="74.52" y2="435" stroke="#bdd0e9" stroke-width="0.9"/><line x1="81.13" y1="0" x2="81.13" y2="435" stroke="#bdd0e9" stroke-width="0.9"/><line x1="87.75" y1="0" x2="87.75" y2="435" stroke="#bdd0e9" stroke-width="0.9"/><line x1="94.36" y1="0" x2="94.36" y2="435" stroke="#bdd0e9" stroke-width="0.9"/><line x1="107.6" y1="0" x2="107.6" y2="435" stroke="#bdd0e9" stroke-width="0.9"/><line x1="114.21" y1="0" x2="114.21" y2="435" stroke="#bdd0e9" stroke-width="0.9"/><line x1="120.83" y1="0" x2="120.83" y2="435" stroke="#bdd0e9" stroke-width="0.9"/><line x1="127.44" y1="0" x2="127.44" y2="435" stroke="#bdd0e9" stroke-width="0.9"/><line x1="140.68" y1="0" x2="140.68" y2="435" stroke="#bdd0e9" stroke-width="0.9"/><line x1="147.29" y1="0" x2="147.29" y2="435" stroke="#bdd0e9" stroke-width="0.9"/><line x1="153.91" y1="0" x2="153.91" y2="435" stroke="#bdd0e9" stroke-width="0.9"/><line x1="160.52" y1="0" x2="160.52" y2="435" stroke="#bdd0e9" stroke-width="0.9"/><line x1="173.76" y1="0" x2="173.76" y2="435" stroke="#bdd0e9" stroke-width="0.9"/><line x1="180.37" y1="0" x2="180.37" y2="435" stroke="#bdd0e9" stroke-width="0.9"/><line x1="186.99" y1="0" x2="186.99" y2="435" stroke="#bdd0e9" stroke-width="0.9"/><line x1="193.6" y1="0" x2="193.6" y2="435" stroke="#bdd0e9" stroke-width="0.9"/><line x1="206.84" y1="0" x2="206.84" y2="435" stroke="#bdd0e9" stroke-width="0.9"/><line x1="213.45" y1="0" x2="213.45" y2="435" stroke="#bdd0e9" stroke-width="0.9"/><line x1="220.07" y1="0" x2="220.07" y2="435" stroke="#bdd0e9" stroke-width="0.9"/><line x1="226.68" y1="0" x2="226.68" y2="435" stroke="#bdd0e9" stroke-width="0.9"/><line x1="239.92" y1="0" x2="239.92" y2="435" stroke="#bdd0e9" stroke-width="0.9"/><line x1="246.53" y1="0" x2="246.53" y2="435" stroke="#bdd0e9" stroke-width="0.9"/><line x1="253.15" y1="0" x2="253.15" y2="435" stroke="#bdd0e9" stroke-width="0.9"/><line x1="259.76" y1="0" x2="259.76" y2="435" stroke="#bdd0e9" stroke-width="0.9"/><line x1="273" y1="0" x2="273" y2="435" stroke="#bdd0e9" stroke-width="0.9"/><line x1="279.61" y1="0" x2="279.61" y2="435" stroke="#bdd0e9" stroke-width="0.9"/><line x1="286.23" y1="0" x2="286.23" y2="435" stroke="#bdd0e9" stroke-width="0.9"/><line x1="292.84" y1="0" x2="292.84" y2="435" stroke="#bdd0e9" stroke-width="0.9"/><line x1="306.08" y1="0" x2="306.08" y2="435" stroke="#bdd0e9" stroke-width="0.9"/><line x1="312.69" y1="0" x2="312.69" y2="435" stroke="#bdd0e9" stroke-width="0.9"/><line x1="319.31" y1="0" x2="319.31" y2="435" stroke="#bdd0e9" stroke-width="0.9"/><line x1="325.92" y1="0" x2="325.92" y2="435" stroke="#bdd0e9" stroke-width="0.9"/><line x1="339.16" y1="0" x2="339.16" y2="435" stroke="#bdd0e9" stroke-width="0.9"/><line x1="345.77" y1="0" x2="345.77" y2="435" stroke="#bdd0e9" stroke-width="0.9"/><line x1="352.39" y1="0" x2="352.39" y2="435" stroke="#bdd0e9" stroke-width="0.9"/><line x1="359" y1="0" x2="359" y2="435" stroke="#bdd0e9" stroke-width="0.9"/><line x1="372.24" y1="0" x2="372.24" y2="435" stroke="#bdd0e9" stroke-width="0.9"/><line x1="378.85" y1="0" x2="378.85" y2="435" stroke="#bdd0e9" stroke-width="0.9"/><line x1="385.47" y1="0" x2="385.47" y2="435" stroke="#bdd0e9" stroke-width="0.9"/><line x1="392.08" y1="0" x2="392.08" y2="435" stroke="#bdd0e9" stroke-width="0.9"/><line x1="405.32" y1="0" x2="405.32" y2="435" stroke="#bdd0e9" stroke-width="0.9"/><line x1="411.93" y1="0" x2="411.93" y2="435" stroke="#bdd0e9" stroke-width="0.9"/><line x1="418.55" y1="0" x2="418.55" y2="435" stroke="#bdd0e9" stroke-width="0.9"/><line x1="425.16" y1="0" x2="425.16" y2="435" stroke="#bdd0e9" stroke-width="0.9"/><line x1="438.4" y1="0" x2="438.4" y2="435" stroke="#bdd0e9" stroke-width="0.9"/><line x1="445.01" y1="0" x2="445.01" y2="435" stroke="#bdd0e9" stroke-width="0.9"/><line x1="451.63" y1="0" x2="451.63" y2="435" stroke="#bdd0e9" stroke-width="0.9"/><line x1="458.24" y1="0" x2="458.24" y2="435" stroke="#bdd0e9" stroke-width="0.9"/><line x1="471.48" y1="0" x2="471.48" y2="435" stroke="#bdd0e9" stroke-width="0.9"/><line x1="478.09" y1="0" x2="478.09" y2="435" stroke="#bdd0e9" stroke-width="0.9"/><line x1="484.71" y1="0" x2="484.71" y2="435" stroke="#bdd0e9" stroke-width="0.9"/><line x1="491.32" y1="0" x2="491.32" y2="435" stroke="#bdd0e9" stroke-width="0.9"/><line x1="504.56" y1="0" x2="504.56" y2="435" stroke="#bdd0e9" stroke-width="0.9"/><line x1="511.17" y1="0" x2="511.17" y2="435" stroke="#bdd0e9" stroke-width="0.9"/><line x1="517.79" y1="0" x2="517.79" y2="435" stroke="#bdd0e9" stroke-width="0.9"/><line x1="524.4" y1="0" x2="524.4" y2="435" stroke="#bdd0e9" stroke-width="0.9"/><line x1="537.64" y1="0" x2="537.64" y2="435" stroke="#bdd0e9" stroke-width="0.9"/><line x1="544.25" y1="0" x2="544.25" y2="435" stroke="#bdd0e9" stroke-width="0.9"/><line x1="550.87" y1="0" x2="550.87" y2="435" stroke="#bdd0e9" stroke-width="0.9"/><line x1="557.48" y1="0" x2="557.48" y2="435" stroke="#bdd0e9" stroke-width="0.9"/><line x1="570.72" y1="0" x2="570.72" y2="435" stroke="#bdd0e9" stroke-width="0.9"/><line x1="577.33" y1="0" x2="577.33" y2="435" stroke="#bdd0e9" stroke-width="0.9"/><line x1="583.95" y1="0" x2="583.95" y2="435" stroke="#bdd0e9" stroke-width="0.9"/><line x1="590.56" y1="0" x2="590.56" y2="435" stroke="#bdd0e9" stroke-width="0.9"/><line x1="603.8" y1="0" x2="603.8" y2="435" stroke="#bdd0e9" stroke-width="0.9"/><line x1="610.41" y1="0" x2="610.41" y2="435" stroke="#bdd0e9" stroke-width="0.9"/><line x1="617.03" y1="0" x2="617.03" y2="435" stroke="#bdd0e9" stroke-width="0.9"/><line x1="623.64" y1="0" x2="623.64" y2="435" stroke="#bdd0e9" stroke-width="0.9"/><line x1="636.88" y1="0" x2="636.88" y2="435" stroke="#bdd0e9" stroke-width="0.9"/><line x1="643.49" y1="0" x2="643.49" y2="435" stroke="#bdd0e9" stroke-width="0.9"/><line x1="650.11" y1="0" x2="650.11" y2="435" stroke="#bdd0e9" stroke-width="0.9"/><line x1="656.72" y1="0" x2="656.72" y2="435" stroke="#bdd0e9" stroke-width="0.9"/><line x1="669.96" y1="0" x2="669.96" y2="435" stroke="#bdd0e9" stroke-width="0.9"/><line x1="676.57" y1="0" x2="676.57" y2="435" stroke="#bdd0e9" stroke-width="0.9"/><line x1="683.19" y1="0" x2="683.19" y2="435" stroke="#bdd0e9" stroke-width="0.9"/><line x1="689.8" y1="0" x2="689.8" y2="435" stroke="#bdd0e9" stroke-width="0.9"/><line x1="703.04" y1="0" x2="703.04" y2="435" stroke="#bdd0e9" stroke-width="0.9"/><line x1="709.65" y1="0" x2="709.65" y2="435" stroke="#bdd0e9" stroke-width="0.9"/><line x1="716.27" y1="0" x2="716.27" y2="435" stroke="#bdd0e9" stroke-width="0.9"/><line x1="722.88" y1="0" x2="722.88" y2="435" stroke="#bdd0e9" stroke-width="0.9"/><line x1="736.12" y1="0" x2="736.12" y2="435" stroke="#bdd0e9" stroke-width="0.9"/><line x1="742.73" y1="0" x2="742.73" y2="435" stroke="#bdd0e9" stroke-width="0.9"/><line x1="749.35" y1="0" x2="749.35" y2="435" stroke="#bdd0e9" stroke-width="0.9"/><line x1="755.96" y1="0" x2="755.96" y2="435" stroke="#bdd0e9" stroke-width="0.9"/><line x1="769.2" y1="0" x2="769.2" y2="435" stroke="#bdd0e9" stroke-width="0.9"/><line x1="0" y1="15.28" x2="771" y2="15.28" stroke="#bdd0e9" stroke-width="0.9"/><line x1="0" y1="21.06" x2="771" y2="21.06" stroke="#bdd0e9" stroke-width="0.9"/><line x1="0" y1="26.84" x2="771" y2="26.84" stroke="#bdd0e9" stroke-width="0.9"/><line x1="0" y1="32.62" x2="771" y2="32.62" stroke="#bdd0e9" stroke-width="0.9"/><line x1="0" y1="44.18" x2="771" y2="44.18" stroke="#bdd0e9" stroke-width="0.9"/><line x1="0" y1="49.96" x2="771" y2="49.96" stroke="#bdd0e9" stroke-width="0.9"/><line x1="0" y1="55.74" x2="771" y2="55.74" stroke="#bdd0e9" stroke-width="0.9"/><line x1="0" y1="61.52" x2="771" y2="61.52" stroke="#bdd0e9" stroke-width="0.9"/><line x1="0" y1="73.08" x2="771" y2="73.08" stroke="#bdd0e9" stroke-width="0.9"/><line x1="0" y1="78.86" x2="771" y2="78.86" stroke="#bdd0e9" stroke-width="0.9"/><line x1="0" y1="84.64" x2="771" y2="84.64" stroke="#bdd0e9" stroke-width="0.9"/><line x1="0" y1="90.42" x2="771" y2="90.42" stroke="#bdd0e9" stroke-width="0.9"/><line x1="0" y1="101.98" x2="771" y2="101.98" stroke="#bdd0e9" stroke-width="0.9"/><line x1="0" y1="107.76" x2="771" y2="107.76" stroke="#bdd0e9" stroke-width="0.9"/><line x1="0" y1="113.54" x2="771" y2="113.54" stroke="#bdd0e9" stroke-width="0.9"/><line x1="0" y1="119.32" x2="771" y2="119.32" stroke="#bdd0e9" stroke-width="0.9"/><line x1="0" y1="130.88" x2="771" y2="130.88" stroke="#bdd0e9" stroke-width="0.9"/><line x1="0" y1="136.66" x2="771" y2="136.66" stroke="#bdd0e9" stroke-width="0.9"/><line x1="0" y1="142.44" x2="771" y2="142.44" stroke="#bdd0e9" stroke-width="0.9"/><line x1="0" y1="148.22" x2="771" y2="148.22" stroke="#bdd0e9" stroke-width="0.9"/><line x1="0" y1="159.78" x2="771" y2="159.78" stroke="#bdd0e9" stroke-width="0.9"/><line x1="0" y1="165.56" x2="771" y2="165.56" stroke="#bdd0e9" stroke-width="0.9"/><line x1="0" y1="171.34" x2="771" y2="171.34" stroke="#bdd0e9" stroke-width="0.9"/><line x1="0" y1="177.12" x2="771" y2="177.12" stroke="#bdd0e9" stroke-width="0.9"/><line x1="0" y1="188.68" x2="771" y2="188.68" stroke="#bdd0e9" stroke-width="0.9"/><line x1="0" y1="194.46" x2="771" y2="194.46" stroke="#bdd0e9" stroke-width="0.9"/><line x1="0" y1="200.24" x2="771" y2="200.24" stroke="#bdd0e9" stroke-width="0.9"/><line x1="0" y1="206.02" x2="771" y2="206.02" stroke="#bdd0e9" stroke-width="0.9"/><line x1="0" y1="217.58" x2="771" y2="217.58" stroke="#bdd0e9" stroke-width="0.9"/><line x1="0" y1="223.36" x2="771" y2="223.36" stroke="#bdd0e9" stroke-width="0.9"/><line x1="0" y1="229.14" x2="771" y2="229.14" stroke="#bdd0e9" stroke-width="0.9"/><line x1="0" y1="234.92" x2="771" y2="234.92" stroke="#bdd0e9" stroke-width="0.9"/><line x1="0" y1="246.48" x2="771" y2="246.48" stroke="#bdd0e9" stroke-width="0.9"/><line x1="0" y1="252.26" x2="771" y2="252.26" stroke="#bdd0e9" stroke-width="0.9"/><line x1="0" y1="258.04" x2="771" y2="258.04" stroke="#bdd0e9" stroke-width="0.9"/><line x1="0" y1="263.82" x2="771" y2="263.82" stroke="#bdd0e9" stroke-width="0.9"/><line x1="0" y1="275.38" x2="771" y2="275.38" stroke="#bdd0e9" stroke-width="0.9"/><line x1="0" y1="281.16" x2="771" y2="281.16" stroke="#bdd0e9" stroke-width="0.9"/><line x1="0" y1="286.94" x2="771" y2="286.94" stroke="#bdd0e9" stroke-width="0.9"/><line x1="0" y1="292.72" x2="771" y2="292.72" stroke="#bdd0e9" stroke-width="0.9"/><line x1="0" y1="304.28" x2="771" y2="304.28" stroke="#bdd0e9" stroke-width="0.9"/><line x1="0" y1="310.06" x2="771" y2="310.06" stroke="#bdd0e9" stroke-width="0.9"/><line x1="0" y1="315.84" x2="771" y2="315.84" stroke="#bdd0e9" stroke-width="0.9"/><line x1="0" y1="321.62" x2="771" y2="321.62" stroke="#bdd0e9" stroke-width="0.9"/><line x1="0" y1="333.18" x2="771" y2="333.18" stroke="#bdd0e9" stroke-width="0.9"/><line x1="0" y1="338.96" x2="771" y2="338.96" stroke="#bdd0e9" stroke-width="0.9"/><line x1="0" y1="344.74" x2="771" y2="344.74" stroke="#bdd0e9" stroke-width="0.9"/><line x1="0" y1="350.52" x2="771" y2="350.52" stroke="#bdd0e9" stroke-width="0.9"/><line x1="0" y1="362.08" x2="771" y2="362.08" stroke="#bdd0e9" stroke-width="0.9"/><line x1="0" y1="367.86" x2="771" y2="367.86" stroke="#bdd0e9" stroke-width="0.9"/><line x1="0" y1="373.64" x2="771" y2="373.64" stroke="#bdd0e9" stroke-width="0.9"/><line x1="0" y1="379.42" x2="771" y2="379.42" stroke="#bdd0e9" stroke-width="0.9"/><line x1="0" y1="390.98" x2="771" y2="390.98" stroke="#bdd0e9" stroke-width="0.9"/><line x1="0" y1="396.76" x2="771" y2="396.76" stroke="#bdd0e9" stroke-width="0.9"/><line x1="0" y1="402.54" x2="771" y2="402.54" stroke="#bdd0e9" stroke-width="0.9"/><line x1="0" y1="408.32" x2="771" y2="408.32" stroke="#bdd0e9" stroke-width="0.9"/><line x1="0" y1="419.88" x2="771" y2="419.88" stroke="#bdd0e9" stroke-width="0.9"/><line x1="0" y1="425.66" x2="771" y2="425.66" stroke="#bdd0e9" stroke-width="0.9"/><line x1="0" y1="431.44" x2="771" y2="431.44" stroke="#bdd0e9" stroke-width="0.9"/><line x1="1.74" y1="0" x2="1.74" y2="435" stroke="#8c9cb2" stroke-width="1.8"/><line x1="34.82" y1="0" x2="34.82" y2="435" stroke="#8c9cb2" stroke-width="1.8"/><line x1="67.9" y1="0" x2="67.9" y2="435" stroke="#6c7c93" stroke-width="2.3"/><line x1="100.98" y1="0" x2="100.98" y2="435" stroke="#8c9cb2" stroke-width="1.8"/><line x1="134.06" y1="0" x2="134.06" y2="435" stroke="#8c9cb2" stroke-width="1.8"/><line x1="167.14" y1="0" x2="167.14" y2="435" stroke="#8c9cb2" stroke-width="1.8"/><line x1="200.22" y1="0" x2="200.22" y2="435" stroke="#8c9cb2" stroke-width="1.8"/><line x1="233.3" y1="0" x2="233.3" y2="435" stroke="#6c7c93" stroke-width="2.3"/><line x1="266.38" y1="0" x2="266.38" y2="435" stroke="#8c9cb2" stroke-width="1.8"/><line x1="299.46" y1="0" x2="299.46" y2="435" stroke="#8c9cb2" stroke-width="1.8"/><line x1="332.54" y1="0" x2="332.54" y2="435" stroke="#8c9cb2" stroke-width="1.8"/><line x1="365.62" y1="0" x2="365.62" y2="435" stroke="#8c9cb2" stroke-width="1.8"/><line x1="398.7" y1="0" x2="398.7" y2="435" stroke="#6c7c93" stroke-width="2.3"/><line x1="431.78" y1="0" x2="431.78" y2="435" stroke="#8c9cb2" stroke-width="1.8"/><line x1="464.86" y1="0" x2="464.86" y2="435" stroke="#8c9cb2" stroke-width="1.8"/><line x1="497.94" y1="0" x2="497.94" y2="435" stroke="#8c9cb2" stroke-width="1.8"/><line x1="531.02" y1="0" x2="531.02" y2="435" stroke="#8c9cb2" stroke-width="1.8"/><line x1="564.1" y1="0" x2="564.1" y2="435" stroke="#6c7c93" stroke-width="2.3"/><line x1="597.18" y1="0" x2="597.18" y2="435" stroke="#8c9cb2" stroke-width="1.8"/><line x1="630.26" y1="0" x2="630.26" y2="435" stroke="#8c9cb2" stroke-width="1.8"/><line x1="663.34" y1="0" x2="663.34" y2="435" stroke="#8c9cb2" stroke-width="1.8"/><line x1="696.42" y1="0" x2="696.42" y2="435" stroke="#8c9cb2" stroke-width="1.8"/><line x1="729.5" y1="0" x2="729.5" y2="435" stroke="#6c7c93" stroke-width="2.3"/><line x1="762.58" y1="0" x2="762.58" y2="435" stroke="#8c9cb2" stroke-width="1.8"/><line x1="0" y1="9.5" x2="771" y2="9.5" stroke="#8c9cb2" stroke-width="1.8"/><line x1="0" y1="38.4" x2="771" y2="38.4" stroke="#6c7c93" stroke-width="2.3"/><line x1="0" y1="67.3" x2="771" y2="67.3" stroke="#8c9cb2" stroke-width="1.8"/><line x1="0" y1="96.2" x2="771" y2="96.2" stroke="#8c9cb2" stroke-width="1.8"/><line x1="0" y1="125.1" x2="771" y2="125.1" stroke="#8c9cb2" stroke-width="1.8"/><line x1="0" y1="154" x2="771" y2="154" stroke="#8c9cb2" stroke-width="1.8"/><line x1="0" y1="182.9" x2="771" y2="182.9" stroke="#6c7c93" stroke-width="2.3"/><line x1="0" y1="211.8" x2="771" y2="211.8" stroke="#8c9cb2" stroke-width="1.8"/><line x1="0" y1="240.7" x2="771" y2="240.7" stroke="#8c9cb2" stroke-width="1.8"/><line x1="0" y1="269.6" x2="771" y2="269.6" stroke="#8c9cb2" stroke-width="1.8"/><line x1="0" y1="298.5" x2="771" y2="298.5" stroke="#8c9cb2" stroke-width="1.8"/><line x1="0" y1="327.4" x2="771" y2="327.4" stroke="#6c7c93" stroke-width="2.3"/><line x1="0" y1="356.3" x2="771" y2="356.3" stroke="#8c9cb2" stroke-width="1.8"/><line x1="0" y1="385.2" x2="771" y2="385.2" stroke="#8c9cb2" stroke-width="1.8"/><line x1="0" y1="414.1" x2="771" y2="414.1" stroke="#8c9cb2" stroke-width="1.8"/></svg><div class="a" style="left:2px;top:2px;width:3px;height:431px;background:#0a0a0a"></div>
<div class="a" style="left:762px;top:2px;width:3px;height:431px;background:#0a0a0a"></div>
<div class="a" style="left:138px;top:8px;width:627px;height:2px;background:#0a0a0a"></div>
<div class="a" style="left:137px;top:2px;width:3px;height:66px;background:#0a0a0a"></div>
<div class="a" style="left:630px;top:2px;width:3px;height:66px;background:#0a0a0a"></div>
<div class="a" style="left:2px;top:66px;width:763px;height:3px;background:#0a0a0a"></div>
<div class="t" style="left:39px;top:19px;font-size:28px">6ème</div>
<div class="t" style="left:660px;top:16.7px;font-size:19px">Chapitre 6</div>
<div class="t" style="left:250px;top:17px;font-size:22.3px;font-weight:bold;font-style:italic;color:#0c246a">La définition d’une PREAO</div>
<div class="t" style="left:79.2px;top:82px;font-size:22px;font-weight:bold;letter-spacing:0.1px">1) Qu’est ce qu’une PREAO :</div>
<div class="a" style="left:79px;top:103.1px;width:306px;height:1.2px;background:#000"></div>
<div class="a" style="left:19px;top:114px;width:731px;height:273px;border-style:solid;border-color:#f0951a;border-width:13.5px 7.5px 13.5px 8px"></div>
<div class="t" style="left:67px;top:126.1px;font-family:'Liberation Serif',serif;font-size:25.6px">PREAO signifie : PREsentation Assistée par Ordinateur.</div>
<div class="t" style="left:67px;top:165.1px;font-family:'Liberation Serif',serif;font-size:25.6px">Il existe des logiciels spécialement conçus pour réaliser ses</div>
<div class="t" style="left:54px;top:197.8px;font-family:'Liberation Serif',serif;font-size:25.6px">présentations (exemple : powepoint, libre office impress).</div>
<div class="t" style="left:67px;top:237.4px;font-family:'Liberation Serif',serif;font-size:25.6px">Ces logiciels permettent de concevoir des diaporamas.</div>
<div class="t" style="left:67px;top:275.7px;font-family:'Liberation Serif',serif;font-size:25.6px">Ces diaporamas sont des PRAEO.</div>
<div class="a" style="left:57.5px;top:174px;width:7px;height:7px;border-radius:50%;background:#fff"></div>
<div class="a" style="left:57.5px;top:245.8px;width:7px;height:7px;border-radius:50%;background:#fff"></div>
<div class="a" style="left:57.5px;top:284.3px;width:7px;height:7px;border-radius:50%;background:#fff"></div>
<div class="a" style="left:57.5px;top:323.7px;width:7px;height:7px;border-radius:50%;background:#fff"></div>
</div><div class="a" style="left:200px;top:185px;width:771px;height:435px;border:1px solid #5a5a5a;border-top-color:#505050"></div>

<!-- SIDEBAR -->
<div class="a" style="left:1019px;top:130.0px;width:2px;height:2px;background:#111"></div>
<div class="a" style="left:1019px;top:134.3px;width:2px;height:2px;background:#111"></div>
<div class="a" style="left:1019px;top:138.6px;width:2px;height:2px;background:#111"></div>
<div class="a" style="left:1019px;top:142.9px;width:2px;height:2px;background:#111"></div>
<div class="t" style="left:1028.5px;top:131.54px;font-size:12px;font-weight:bold;">Propriétés</div>
<svg style="left:1314px;top:132px" width="10" height="10" viewBox="0 0 10 10"><path d="M0.5 0.5L9.5 9.5M9.5 0.5L0.5 9.5" stroke="#333" stroke-width="1.1"/></svg>
<svg style="left:1341px;top:134px" width="11" height="9" viewBox="0 0 11 9"><path d="M0 1H10.5M0 4.3H10.5M0 7.6H10.5" stroke="#333" stroke-width="1.2"/></svg>
<div class="a" style="left:1018px;top:150px;width:309px;height:23px;background:#dfdfdf"></div><div class="a" style="left:1020px;top:155px;width:9px;height:9px;background:#fafafa;border:1px solid #8a8a8a;border-radius:1px"></div><div class="a" style="left:1022px;top:159px;width:5px;height:1px;background:#2f5fc0"></div><div class="t" style="left:1035px;top:154.84px;font-size:12px;font-weight:bold;">Diapo</div>
<svg style="left:1312.5px;top:155.5px" width="10" height="10" viewBox="0 0 10 10"><path d="M0.6 9V0.6H9" fill="none" stroke="#444" stroke-width="1.1"/><path d="M2.5 2.5L9 9M9 4.8V9H4.8" fill="none" stroke="#444" stroke-width="1.1"/></svg>
<div class="t" style="right:208px;top:184.44px;font-size:12px"><span class="u">F</span>ormat :</div>
<div class="t" style="right:208px;top:210.74px;font-size:12px;">Orientation :</div>
<div class="t" style="right:208px;top:236.74px;font-size:12px;">Arrière-plan :</div>
<div class="a" style="left:1156px;top:179px;width:150px;height:22px;background:#fff;border:1px solid #7a7a7a;overflow:hidden"><div class="t" style="left:2px;top:4.14px;font-size:12px">Écran large</div><div class="a" style="left:131px;top:0;width:17px;height:20px;background:#e6e6e6;border-left:1px solid #d0d0d0"></div><svg style="left:135px;top:8px" width="10" height="6" viewBox="0 0 10 6"><path d="M1 0.8L5 4.8L9 0.8" fill="none" stroke="#444" stroke-width="1.1"/></svg></div>
<div class="a" style="left:1156px;top:205.5px;width:150px;height:22px;background:#fff;border:1px solid #7a7a7a;overflow:hidden"><div class="t" style="left:2px;top:4.14px;font-size:12px">Paysage</div><div class="a" style="left:131px;top:0;width:17px;height:20px;background:#e6e6e6;border-left:1px solid #d0d0d0"></div><svg style="left:135px;top:8px" width="10" height="6" viewBox="0 0 10 6"><path d="M1 0.8L5 4.8L9 0.8" fill="none" stroke="#444" stroke-width="1.1"/></svg></div>
<div class="a" style="left:1156px;top:231.5px;width:150px;height:22px;background:#fff;border:1px solid #7a7a7a;overflow:hidden"><div class="t" style="left:2px;top:4.14px;font-size:12px">Bitmap</div><div class="a" style="left:131px;top:0;width:17px;height:20px;background:#e6e6e6;border-left:1px solid #d0d0d0"></div><svg style="left:135px;top:8px" width="10" height="6" viewBox="0 0 10 6"><path d="M1 0.8L5 4.8L9 0.8" fill="none" stroke="#444" stroke-width="1.1"/></svg></div>
<div class="a" style="left:1156px;top:257.3px;width:150px;height:22px;background:#fff;border:1px solid #7a7a7a;overflow:hidden"><div class="a" style="left:131px;top:0;width:17px;height:20px;background:#e6e6e6;border-left:1px solid #d0d0d0"></div><svg style="left:135px;top:8px" width="10" height="6" viewBox="0 0 10 6"><path d="M1 0.8L5 4.8L9 0.8" fill="none" stroke="#444" stroke-width="1.1"/></svg></div>
<div class="a" style="left:1157px;top:284.5px;width:148px;height:27px;background:#e1e1e1;border:1px solid #c9c9c9"></div><div class="t" style="left:1180.5px;top:292.84px;font-size:12px;">Insérer une image...</div>
<div class="t" style="right:208px;top:322.04px;font-size:12px;">Diapositive maîtresse :</div>
<div class="a" style="left:1156px;top:316.3px;width:150px;height:22px;background:#fff;border:1px solid #7a7a7a;overflow:hidden"><div class="t" style="left:2px;top:4.14px;font-size:12px">Master1-Layout2-tx-Title</div><div class="a" style="left:131px;top:0;width:17px;height:20px;background:#e6e6e6;border-left:1px solid #d0d0d0"></div><svg style="left:135px;top:8px" width="10" height="6" viewBox="0 0 10 6"><path d="M1 0.8L5 4.8L9 0.8" fill="none" stroke="#444" stroke-width="1.1"/></svg></div>
<div class="a" style="left:1156.5px;top:344.5px;width:12.5px;height:12.5px;background:#fff;border:1px solid #333"></div>
<svg style="left:1158px;top:346px" width="10" height="10" viewBox="0 0 10 10"><path d="M1 5L3.8 8L9 1.5" fill="none" stroke="#222" stroke-width="1.2"/></svg>
<div class="t" style="left:1173px;top:344.44px;font-size:12px;">Arrière-plan du masque</div>
<div class="a" style="left:1156.5px;top:363px;width:12.5px;height:12.5px;background:#fff;border:1px solid #333"></div>
<div class="t" style="left:1173px;top:362.84px;font-size:12px;">Objets du masque</div>
<div class="a" style="left:1157px;top:381.3px;width:148px;height:27px;background:#e1e1e1;border:1px solid #c9c9c9"></div><div class="t" style="left:1187px;top:388.94px;font-size:12px;">Affichage maître</div>
<div class="a" style="left:1018px;top:417.8px;width:309px;height:23px;background:#dfdfdf"></div><div class="a" style="left:1020px;top:422.8px;width:9px;height:9px;background:#fafafa;border:1px solid #8a8a8a;border-radius:1px"></div><div class="a" style="left:1022px;top:426.8px;width:5px;height:1px;background:#2f5fc0"></div><div class="t" style="left:1035px;top:422.64px;font-size:12px;font-weight:bold;">Mises en page</div>
<div class="a" style="left:1121px;top:440px;width:103px;height:66px;border:1.5px solid #1f7ad2"></div>
<svg style="left:1038px;top:449px" width="61" height="47" viewBox="0 0 61 47"><rect x="0.65" y="0.65" width="59.7" height="45.7" fill="#fafafa" stroke="#333" stroke-width="1.3"/></svg>
<svg style="left:1141px;top:449px" width="61" height="47" viewBox="0 0 61 47"><rect x="0.65" y="0.65" width="59.7" height="45.7" fill="#fafafa" stroke="#333" stroke-width="1.3"/><rect x="5.5" y="4.5" width="50.3" height="8" rx="1" stroke="#707070" stroke-width="1" fill="none"/><path d="M11 8.6H50.5" stroke="#1a7fd0" stroke-width="2.6" stroke-linecap="round"/><rect x="5.5" y="17.2" width="50.3" height="25.3" rx="1" stroke="#707070" stroke-width="1" fill="none"/><path d="M17.5 26H42.5" stroke="#1a7fd0" stroke-width="1.8"/></svg>
<svg style="left:1244px;top:449px" width="61" height="47" viewBox="0 0 61 47"><rect x="0.65" y="0.65" width="59.7" height="45.7" fill="#fafafa" stroke="#333" stroke-width="1.3"/><rect x="5.5" y="4.5" width="50.3" height="8" rx="1" stroke="#707070" stroke-width="1" fill="none"/><path d="M11 8.6H50.5" stroke="#1a7fd0" stroke-width="2.6" stroke-linecap="round"/><rect x="5.5" y="17.2" width="50.3" height="25.3" rx="1" stroke="#707070" stroke-width="1" fill="none"/></svg>
<svg style="left:1038px;top:515.3px" width="61" height="47" viewBox="0 0 61 47"><rect x="0.65" y="0.65" width="59.7" height="45.7" fill="#fafafa" stroke="#333" stroke-width="1.3"/><rect x="5.5" y="4.5" width="50.3" height="8" rx="1" stroke="#707070" stroke-width="1" fill="none"/><path d="M11 8.6H50.5" stroke="#1a7fd0" stroke-width="2.6" stroke-linecap="round"/><rect x="5.5" y="17.2" width="23.1" height="25.3" rx="1" stroke="#707070" stroke-width="1" fill="none"/><rect x="32.4" y="17.2" width="23.4" height="25.3" rx="1" stroke="#707070" stroke-width="1" fill="none"/></svg>
<svg style="left:1141px;top:515.3px" width="61" height="47" viewBox="0 0 61 47"><rect x="0.65" y="0.65" width="59.7" height="45.7" fill="#fafafa" stroke="#333" stroke-width="1.3"/><rect x="5.5" y="4.5" width="50.3" height="8" rx="1" stroke="#707070" stroke-width="1" fill="none"/><path d="M11 8.6H50.5" stroke="#1a7fd0" stroke-width="2.6" stroke-linecap="round"/></svg>
<svg style="left:1244px;top:515.3px" width="61" height="47" viewBox="0 0 61 47"><rect x="0.65" y="0.65" width="59.7" height="45.7" fill="#fafafa" stroke="#333" stroke-width="1.3"/><rect x="5.5" y="4.5" width="50.3" height="38" rx="1" stroke="#707070" stroke-width="1" fill="none"/><path d="M19 21.5H43M22.5 25.5H39.5" stroke="#1a7fd0" stroke-width="1.8"/></svg>
<svg style="left:1038px;top:581.4px" width="61" height="47" viewBox="0 0 61 47"><rect x="0.65" y="0.65" width="59.7" height="45.7" fill="#fafafa" stroke="#333" stroke-width="1.3"/><rect x="5.5" y="4.5" width="50.3" height="8" rx="1" stroke="#707070" stroke-width="1" fill="none"/><path d="M11 8.6H50.5" stroke="#1a7fd0" stroke-width="2.6" stroke-linecap="round"/><rect x="5.5" y="17" width="23.1" height="11.3" rx="1" stroke="#707070" stroke-width="1" fill="none"/><rect x="5.5" y="31.2" width="23.1" height="11.3" rx="1" stroke="#707070" stroke-width="1" fill="none"/><rect x="32.4" y="17" width="23.4" height="25.5" rx="1" stroke="#707070" stroke-width="1" fill="none"/></svg>
<svg style="left:1141px;top:581.4px" width="61" height="47" viewBox="0 0 61 47"><rect x="0.65" y="0.65" width="59.7" height="45.7" fill="#fafafa" stroke="#333" stroke-width="1.3"/><rect x="5.5" y="4.5" width="50.3" height="8" rx="1" stroke="#707070" stroke-width="1" fill="none"/><path d="M11 8.6H50.5" stroke="#1a7fd0" stroke-width="2.6" stroke-linecap="round"/><rect x="5.5" y="17" width="23.1" height="25.5" rx="1" stroke="#707070" stroke-width="1" fill="none"/><rect x="32.4" y="17" width="23.4" height="11.3" rx="1" stroke="#707070" stroke-width="1" fill="none"/><rect x="32.4" y="31.2" width="23.4" height="11.3" rx="1" stroke="#707070" stroke-width="1" fill="none"/></svg>
<svg style="left:1244px;top:581.4px" width="61" height="47" viewBox="0 0 61 47"><rect x="0.65" y="0.65" width="59.7" height="45.7" fill="#fafafa" stroke="#333" stroke-width="1.3"/><rect x="5.5" y="4.5" width="50.3" height="8" rx="1" stroke="#707070" stroke-width="1" fill="none"/><path d="M11 8.6H50.5" stroke="#1a7fd0" stroke-width="2.6" stroke-linecap="round"/><rect x="5.5" y="17" width="23.1" height="11.3" rx="1" stroke="#707070" stroke-width="1" fill="none"/><rect x="32.4" y="17" width="23.4" height="11.3" rx="1" stroke="#707070" stroke-width="1" fill="none"/><rect x="5.5" y="31.2" width="50.3" height="11.3" rx="1" stroke="#707070" stroke-width="1" fill="none"/></svg>
<svg style="left:1038px;top:647px" width="61" height="47" viewBox="0 0 61 47"><rect x="0.65" y="0.65" width="59.7" height="45.7" fill="#fafafa" stroke="#333" stroke-width="1.3"/><rect x="5.5" y="4.5" width="50.3" height="8" rx="1" stroke="#707070" stroke-width="1" fill="none"/><path d="M11 8.6H50.5" stroke="#1a7fd0" stroke-width="2.6" stroke-linecap="round"/><rect x="5.5" y="17" width="50.3" height="11.3" rx="1" stroke="#707070" stroke-width="1" fill="none"/><rect x="5.5" y="31.2" width="50.3" height="11.3" rx="1" stroke="#707070" stroke-width="1" fill="none"/></svg>
<svg style="left:1141px;top:647px" width="61" height="47" viewBox="0 0 61 47"><rect x="0.65" y="0.65" width="59.7" height="45.7" fill="#fafafa" stroke="#333" stroke-width="1.3"/><rect x="5.5" y="4.5" width="50.3" height="8" rx="1" stroke="#707070" stroke-width="1" fill="none"/><path d="M11 8.6H50.5" stroke="#1a7fd0" stroke-width="2.6" stroke-linecap="round"/><rect x="5.5" y="17" width="23.1" height="11.3" rx="1" stroke="#707070" stroke-width="1" fill="none"/><rect x="32.4" y="17" width="23.4" height="11.3" rx="1" stroke="#707070" stroke-width="1" fill="none"/><rect x="5.5" y="31.2" width="23.1" height="11.3" rx="1" stroke="#707070" stroke-width="1" fill="none"/><rect x="32.4" y="31.2" width="23.4" height="11.3" rx="1" stroke="#707070" stroke-width="1" fill="none"/></svg>
<svg style="left:1244px;top:647px" width="61" height="47" viewBox="0 0 61 47"><rect x="0.65" y="0.65" width="59.7" height="45.7" fill="#fafafa" stroke="#333" stroke-width="1.3"/><rect x="5.5" y="17" width="15.3" height="11.3" rx="1" stroke="#707070" stroke-width="1" fill="none"/><rect x="5.5" y="31.2" width="15.3" height="11.3" rx="1" stroke="#707070" stroke-width="1" fill="none"/><rect x="23.3" y="17" width="15.3" height="11.3" rx="1" stroke="#707070" stroke-width="1" fill="none"/><rect x="23.3" y="31.2" width="15.3" height="11.3" rx="1" stroke="#707070" stroke-width="1" fill="none"/><rect x="40.9" y="17" width="14.9" height="11.3" rx="1" stroke="#707070" stroke-width="1" fill="none"/><rect x="40.9" y="31.2" width="14.9" height="11.3" rx="1" stroke="#707070" stroke-width="1" fill="none"/><rect x="5.5" y="4.5" width="50.3" height="8" rx="1" stroke="#707070" stroke-width="1" fill="none"/><path d="M11 8.6H50.5" stroke="#1a7fd0" stroke-width="2.6" stroke-linecap="round"/></svg>
<div class="a" style="left:1329px;top:152px;width:27px;height:33.5px;background:#cce4f7;border:1px solid #99ccf3;border-right:none"></div>
<svg style="left:1335.5px;top:158.5px" width="21" height="20" viewBox="0 0 21 20"><rect x="0.75" y="0.75" width="19.5" height="18.5" fill="#fff" stroke="#333" stroke-width="1.5"/><rect x="1" y="1" width="19" height="3" fill="#5a5a5a"/><path d="M3.5 9.2H17.5M3.5 13.8H17.5" stroke="#333" stroke-width="1.2"/><circle cx="12" cy="9.2" r="1.7" fill="#2b8fde"/><circle cx="7.5" cy="13.8" r="1.7" fill="#2b8fde"/></svg>
<svg style="left:1335px;top:196px" width="21" height="16" viewBox="0 0 21 16"><path d="M1.5 1.5H5M0 4.5H5M1.5 7.5H5M0 10.5H5M1.5 13.5H5" stroke="#f39a3c" stroke-width="1.1"/><rect x="7.2" y="0.75" width="14" height="14.5" fill="#fff" stroke="#333" stroke-width="1.5"/><path d="M9.5 5H21" stroke="#1f7fd0" stroke-width="1.8"/></svg>
<svg style="left:1335px;top:230px" width="21" height="16" viewBox="0 0 21 16"><path d="M7.5 0.8L9.6 5.3L14.5 5.6L10.8 8.9L12 13.8L7.5 11.2L3 13.8L4.2 8.9L0.5 5.6L5.4 5.3Z" fill="#f8d48a" stroke="#ef8c24" stroke-width="1.2" stroke-linejoin="round"/><path d="M11 4H21M13 7H21M12 10H21M14 13H21" stroke="#f39a3c" stroke-width="1.1"/></svg>
<svg style="left:1335.5px;top:264.5px" width="21" height="17" viewBox="0 0 21 17"><rect x="0.75" y="0.75" width="19.5" height="15.5" fill="#2380d0" stroke="#1b4f85" stroke-width="1.5"/><rect x="2.8" y="2.8" width="15.4" height="3.2" fill="none" stroke="#fff" stroke-width="1"/><rect x="2.8" y="7.4" width="15.4" height="7" fill="none" stroke="#fff" stroke-width="1"/></svg>
<svg style="left:1335px;top:296.5px" width="21" height="23" viewBox="0 0 21 23"><text x="0" y="17" font-family="Liberation Sans" font-size="20" fill="#333">A</text><path d="M9 21Q8 17.5 11.5 17L20 8.5" fill="none" stroke="#333" stroke-width="1.2"/><path d="M9 21Q13 21.5 13.5 18L11.5 17Z" fill="#2b8fde"/></svg>
<svg style="left:1335px;top:332px" width="21" height="21" viewBox="0 0 21 21"><path d="M0.8 17V1H7L9 3.5H15V6" fill="#fbe0a6" stroke="#ef8c24" stroke-width="1.4"/><path d="M0.8 17L3 6H16L14 17Z" fill="#f8d48a" stroke="#ef8c24" stroke-width="1.4"/><rect x="9" y="9" width="12" height="11" fill="#fff" stroke="#333" stroke-width="1.2"/><path d="M9.5 19.5L13 15L15.5 17.5L17.5 15.5L20.5 19.5Z" fill="#2b8fde"/><circle cx="17" cy="12" r="1.2" fill="#2b8fde"/></svg>
<svg style="left:1335px;top:366px" width="21" height="23" viewBox="0 0 21 23"><circle cx="11.5" cy="11.5" r="10.2" fill="#fff" stroke="#333" stroke-width="1.4"/><path d="M16 7L13 13L7 16L10 10Z" fill="#2b8fde"/></svg>
<svg style="left:1335px;top:402.5px" width="21" height="21" viewBox="0 0 21 21"><path d="M10.5 0.8L20.2 10.5L10.5 20.2L0.8 10.5Z" fill="#fff" stroke="#333" stroke-width="1.3" stroke-linejoin="round"/></svg>

</body></html>
